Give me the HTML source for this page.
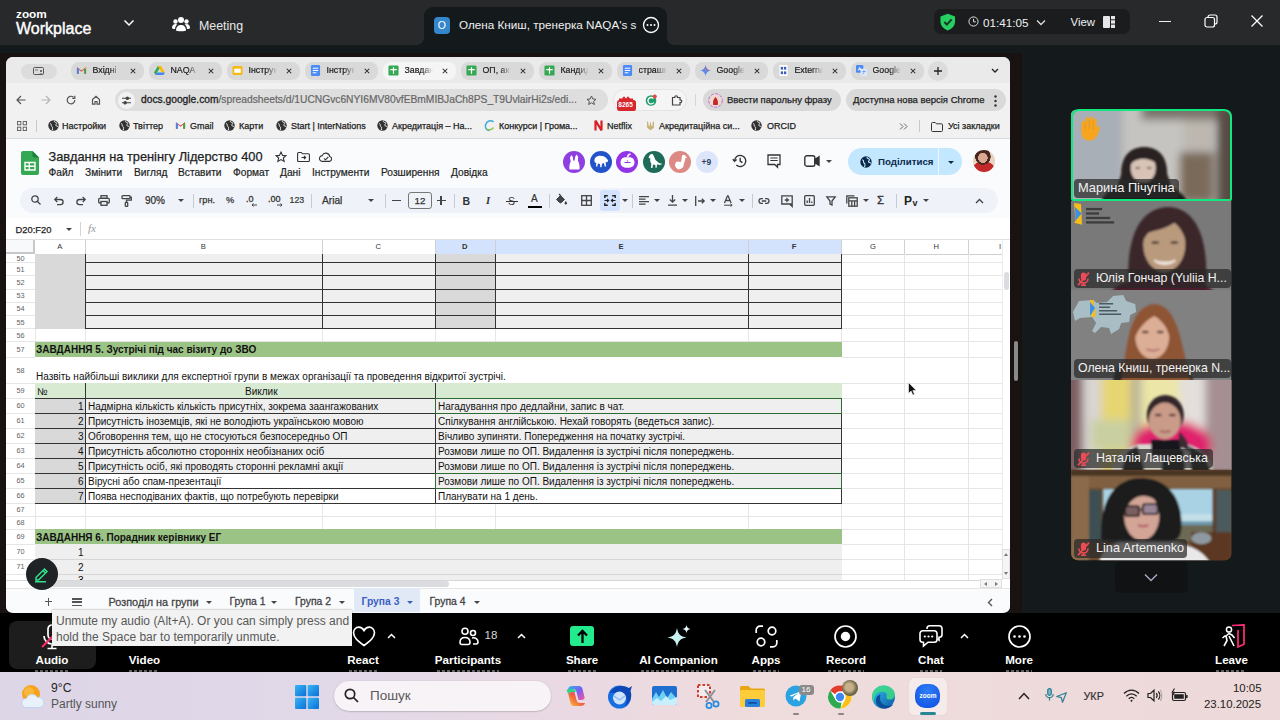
<!DOCTYPE html>
<html lang="uk">
<head>
<meta charset="utf-8">
<title>Zoom Meeting</title>
<style>
*{box-sizing:border-box;margin:0;padding:0}
html,body{width:1280px;height:720px;overflow:hidden;background:#121618;font-family:"Liberation Sans",sans-serif;}
.abs,.abs *{position:absolute}
#root{position:relative;width:1280px;height:720px;overflow:hidden;background:#13171a}
.t{white-space:nowrap;line-height:1}
svg{overflow:visible}
/* ---------- zoom title bar ---------- */
#ztitle{left:0;top:0;width:1280px;height:44.5px;background:#27292b}
#ztab{left:424px;top:7px;width:243px;height:38px;background:#14191c;border-radius:9px 9px 0 0}
#zpill{left:933.500px;top:8.500px;width:196px;height:25px;background:#1a1c1e;border-radius:7px}
/* ---------- shared screen ---------- */
#leftstrip{left:0;top:53px;width:30px;height:560px;background:#181311}
#share{left:6px;top:57px;width:1004px;height:555.500px;background:#f9fbfd;border-radius:7px;overflow:hidden}
#ctabs{left:0;top:0;width:1004px;height:28px;background:#eaeaea}
#cbar{left:0;top:26px;width:1004px;height:32px;background:#f1f1f1}
#cbm{left:0;top:58px;width:1004px;height:24px;background:#f1f1f1;border-bottom:1px solid #d9d9d9}
.ctab{top:4.5px;height:18px;width:72.5px;border-radius:8px;background:#d9d9d9}
.ctab.act{background:#f5f5f5}
.ctab .fav{left:5px;top:3.5px;width:11px;height:11px}
.ctab .lbl{left:21.5px;top:4.8px;font-size:8.8px;color:#1c1c1c;width:28px;overflow:hidden;-webkit-text-stroke:.2px #1c1c1c;-webkit-mask-image:linear-gradient(90deg,#000 60%,transparent);mask-image:linear-gradient(90deg,#000 60%,transparent)}
.ctab .x{left:59px;top:6px;width:6px;height:6px}
.bm{top:64.5px;font-size:9px;color:#1c1c1c;-webkit-text-stroke:.25px #1c1c1c}
.gl{top:63px;width:11px;height:11px}
.pill{top:32px;height:22px;border-radius:11px;background:#dadada}
.sep{width:1px;background:#c9c9c9}
/* ---------- sheets ---------- */
.menu{top:110px;font-size:10.4px;color:#1f1f1f;-webkit-text-stroke:.2px #1f1f1f}
.tbi{top:137px}
.car{top:142px;width:0;height:0;border-left:3px solid transparent;border-right:3px solid transparent;border-top:3.500px solid #444}
.tsep{top:135px;width:1px;height:14px;background:#c7cad0}
.rh{left:0;width:29px;font-size:7.300px;color:#5f6368;text-align:center;line-height:1}
.cell{font-size:9.600px;color:#000;line-height:1;white-space:nowrap}
.hl{height:1px;background:#e2e2e2;left:29px}
.vl{width:1px;background:#e2e2e2}
.bl{background:#222}
.stab{top:539px;font-size:10.400px;color:#444;-webkit-text-stroke:.25px #444;white-space:nowrap;line-height:1}
/* zoom bar */
.zl{top:41px;font-size:11.600px;color:#fff;font-weight:bold;white-space:nowrap;line-height:1;transform:translateX(-50%)}
.nm{font-size:12.500px;color:#f2f2f2;white-space:nowrap;line-height:1}
.nmb{height:19px;background:rgba(40,40,40,.72);border-radius:4px}
</style>
</head>
<body>
<div id="root" class="abs">
<!-- ================= ZOOM TITLE BAR ================= -->
<div id="ztitle">
  <div class="t" style="left:16px;top:8.500px;font-size:11.800px;color:#fff;font-weight:bold">zoom</div>
  <div class="t" style="left:16px;top:20.500px;font-size:16px;color:#fff;-webkit-text-stroke:.4px #fff">Workplace</div>
  <svg style="left:123px;top:18px" width="12" height="10" viewBox="0 0 12 10"><path d="M1.500 2.500 6 7l4.500-4.500" fill="none" stroke="#fff" stroke-width="1.500"/></svg>
  <svg style="left:172px;top:15px" width="18" height="18" viewBox="0 0 18 18" fill="#fff"><circle cx="9" cy="5" r="3"/><circle cx="3.500" cy="6.500" r="2.200"/><circle cx="14.500" cy="6.500" r="2.200"/><path d="M4 15.500c0-3.500 2-5.500 5-5.500s5 2 5 5.500c0 1-10 1-10 0z"/><path d="M0 13c0-2.500 1.500-4 3.500-4 .8 0 1.400.2 1.900.6C4 10.600 3.200 12 3 14c-1.500 0-3-.3-3-1zM18 13c0-2.500-1.500-4-3.500-4-.8 0-1.400.2-1.900.6 1.400 1 2.200 2.400 2.400 4.400 1.500 0 3-.3 3-1z"/></svg>
  <div class="t" style="left:199px;top:19.500px;font-size:12.400px;color:#e8e8e8">Meeting</div>
  <div id="ztab">
    <div style="left:-7px;bottom:.500px;width:7px;height:7px;background:radial-gradient(circle at 0 0,transparent 6.500px,#14191c 7px)"></div>
    <div style="right:-7px;bottom:.500px;width:7px;height:7px;background:radial-gradient(circle at 100% 0,transparent 6.500px,#14191c 7px)"></div>
    <div style="left:9.500px;top:10px;width:16.500px;height:16.500px;border-radius:4px;background:#3587cc"></div>
    <div class="t" style="left:13.700px;top:13px;font-size:10.500px;color:#fff">O</div>
    <div class="t" style="left:35px;top:12px;font-size:11.700px;color:#f0f0f0">Олена Книш, тренерка NAQA's s</div>
    <svg style="left:218px;top:9px" width="18" height="18" viewBox="0 0 18 18"><circle cx="9" cy="9" r="7.500" fill="none" stroke="#fff" stroke-width="1.300"/><circle cx="5.500" cy="9" r="1" fill="#fff"/><circle cx="9" cy="9" r="1" fill="#fff"/><circle cx="12.500" cy="9" r="1" fill="#fff"/></svg>
  </div>
  <div id="zpill">
    <svg style="left:5px;top:4px" width="17.500" height="18" viewBox="0 0 20 21"><path d="M10 1 18.500 4v6c0 5-3.500 8.500-8.500 10.500C5 18.500 1.500 15 1.500 10V4z" fill="#25cf62"/><path d="M6 10.500l3 3 5.500-6" fill="none" stroke="#173a26" stroke-width="2.300"/></svg>
    <svg style="left:34.500px;top:7.500px" width="11" height="11" viewBox="0 0 11 11"><circle cx="5.500" cy="5.500" r="4.600" fill="none" stroke="#ddd" stroke-width="1"/><path d="M5.500 2.800v3h2.300" fill="none" stroke="#ddd" stroke-width="1"/></svg>
    <div class="t" style="left:49.500px;top:8px;font-size:11.700px;color:#f0f0f0">01:41:05</div>
    <svg style="left:102px;top:10px" width="10" height="8" viewBox="0 0 10 8"><path d="M1 1.500 5 5.500l4-4" fill="none" stroke="#ddd" stroke-width="1.300"/></svg>
    <div class="t" style="left:137px;top:8px;font-size:11.400px;color:#f0f0f0">View</div>
    <svg style="left:169px;top:7px" width="12" height="12" viewBox="0 0 12 12" fill="#e6e6e6"><rect x="0" y="0" width="7" height="12" rx="1"/><rect x="8" y="0" width="4" height="3.300"/><rect x="8" y="4.300" width="4" height="3.300"/><rect x="8" y="8.600" width="4" height="3.400"/></svg>
  </div>
  <div style="left:1159px;top:20.500px;width:11.500px;height:1.200px;background:#f0f0f0"></div>
  <svg style="left:1204px;top:14px" width="14" height="14" viewBox="0 0 14 14" fill="none" stroke="#fff" stroke-width="1.200"><rect x="1" y="3.500" width="9.500" height="9.500" rx="2"/><path d="M4 3.500V3a2 2 0 0 1 2-2h5a2 2 0 0 1 2 2v5a2 2 0 0 1-2 2h-.5"/></svg>
  <svg style="left:1251px;top:15px" width="12" height="12" viewBox="0 0 12 12"><path d="M.5.500l11 11M11.500.500l-11 11" stroke="#fff" stroke-width="1.300"/></svg>
</div>
<div id="leftstrip"></div>
<!-- ================= SHARED SCREEN (CHROME + SHEETS) ================= -->
<div id="share">
<div id="ctabs"></div><div id="cbar"></div><div id="cbm"></div>
<div style="left:14.5px;top:6.5px;width:36.500px;height:15px;border-radius:7.500px;background:#dcdcdc"></div>
<svg style="left:27px;top:9.5px" width="11" height="9" viewBox="0 0 11 9"><rect x=".5" y=".5" width="10" height="7" rx="1" fill="none" stroke="#555" stroke-width="1"/><circle cx="8" cy="4" r="1.100" fill="#555"/><path d="M6 7.500c0-1.500 4-1.500 4 0z" fill="#555"/><path d="M2 3h3" stroke="#555" stroke-width=".8"/></svg>
<div class="ctab" style="left:65px"><svg class="fav" viewBox="0 0 12 12"><path d="M1 2.500v7h2V5l3 2.300L9 5v4.500h2v-7L6 6z" fill="#ea4335"/><path d="M1 2.500v7h2V4z" fill="#4285f4"/><path d="M11 2.500v7H9V4z" fill="#34a853"/><path d="M9 4l2-1.500V4z" fill="#fbbc04"/></svg><div class="t lbl">Вхідні</div><svg class="x" viewBox="0 0 8 8"><path d="M1 1l6 6M7 1 1 7" stroke="#222" stroke-width="1.400"/></svg></div>
<div class="ctab" style="left:143px"><svg class="fav" viewBox="0 0 12 12"><path d="M4.200 1h3.600L12 8.200H8.400z" fill="#fbbc04"/><path d="M4.200 1 0 8.200 1.800 11 6 3.900z" fill="#34a853"/><path d="M1.800 11h8.400L12 8.200H3.500z" fill="#4285f4"/><path d="M8.400 8.200 6 3.900 7.800 1 12 8.200z" fill="#ea4335" opacity=".0"/></svg><div class="t lbl">NAQA -</div><svg class="x" viewBox="0 0 8 8"><path d="M1 1l6 6M7 1 1 7" stroke="#222" stroke-width="1.400"/></svg></div>
<div class="ctab" style="left:221px"><svg class="fav" viewBox="0 0 12 12"><rect x=".5" y="1" width="11" height="10" rx="1.500" fill="#f5ba15"/><rect x="2.500" y="4" width="7" height="4.500" fill="#fff"/></svg><div class="t lbl">Інструк</div><svg class="x" viewBox="0 0 8 8"><path d="M1 1l6 6M7 1 1 7" stroke="#222" stroke-width="1.400"/></svg></div>
<div class="ctab" style="left:299px"><svg class="fav" viewBox="0 0 12 12"><rect x="1" y="0" width="10" height="12" rx="1.500" fill="#4b8bf5"/><path d="M3 3.500h6M3 6h6M3 8.500h4" stroke="#fff" stroke-width="1.100"/></svg><div class="t lbl">Інструк</div><svg class="x" viewBox="0 0 8 8"><path d="M1 1l6 6M7 1 1 7" stroke="#222" stroke-width="1.400"/></svg></div>
<div class="ctab act" style="left:377px"><svg class="fav" viewBox="0 0 12 12"><rect x=".5" y=".5" width="11" height="11" rx="1.500" fill="#34a853"/><path d="M6 2.500v7M2.500 5h7" stroke="#fff" stroke-width="1.300"/></svg><div class="t lbl">Завдан</div><svg class="x" viewBox="0 0 8 8"><path d="M1 1l6 6M7 1 1 7" stroke="#222" stroke-width="1.400"/></svg></div>
<div class="ctab" style="left:455px"><svg class="fav" viewBox="0 0 12 12"><rect x=".5" y=".5" width="11" height="11" rx="1.500" fill="#34a853"/><path d="M6 2.500v7M2.500 5h7" stroke="#fff" stroke-width="1.300"/></svg><div class="t lbl">ОП, акт</div><svg class="x" viewBox="0 0 8 8"><path d="M1 1l6 6M7 1 1 7" stroke="#222" stroke-width="1.400"/></svg></div>
<div class="ctab" style="left:533px"><svg class="fav" viewBox="0 0 12 12"><rect x=".5" y=".5" width="11" height="11" rx="1.500" fill="#34a853"/><path d="M6 2.500v7M2.500 5h7" stroke="#fff" stroke-width="1.300"/></svg><div class="t lbl">Кандид</div><svg class="x" viewBox="0 0 8 8"><path d="M1 1l6 6M7 1 1 7" stroke="#222" stroke-width="1.400"/></svg></div>
<div class="ctab" style="left:611px"><svg class="fav" viewBox="0 0 12 12"><rect x="1" y="0" width="10" height="12" rx="1.500" fill="#4b8bf5"/><path d="M3 3.500h6M3 6h6M3 8.500h4" stroke="#fff" stroke-width="1.100"/></svg><div class="t lbl">страшн</div><svg class="x" viewBox="0 0 8 8"><path d="M1 1l6 6M7 1 1 7" stroke="#222" stroke-width="1.400"/></svg></div>
<div class="ctab" style="left:689px"><svg class="fav" viewBox="0 0 12 12"><path d="M6 0c.4 3.300 2.700 5.600 6 6-3.300.4-5.600 2.700-6 6-.4-3.300-2.700-5.600-6-6 3.300-.4 5.600-2.700 6-6z" fill="#5b8def"/><path d="M6 0c.4 3.300 2.700 5.600 6 6H6z" fill="#d96570" opacity=".7"/></svg><div class="t lbl">Google</div><svg class="x" viewBox="0 0 8 8"><path d="M1 1l6 6M7 1 1 7" stroke="#222" stroke-width="1.400"/></svg></div>
<div class="ctab" style="left:767px"><svg class="fav" viewBox="0 0 12 12"><rect x="1.500" y="0" width="9" height="12" rx="1" fill="#fff"/><rect x="3" y="2" width="2.500" height="3" fill="#3b5fc0"/><rect x="6.500" y="2" width="2.500" height="3" fill="#3b5fc0"/><rect x="3" y="7" width="2.500" height="3" fill="#3b5fc0"/><rect x="6.500" y="7" width="2.500" height="3" fill="#3b5fc0"/></svg><div class="t lbl">Externa</div><svg class="x" viewBox="0 0 8 8"><path d="M1 1l6 6M7 1 1 7" stroke="#222" stroke-width="1.400"/></svg></div>
<div class="ctab" style="left:845px"><svg class="fav" viewBox="0 0 12 12"><rect x="0" y="0" width="8" height="8.500" rx="1.200" fill="#4b8bf5"/><rect x="5" y="4" width="7" height="8" rx="1.200" fill="#dfe8fb"/><path d="M2.500 6 4 2.500 5.500 6M3 5h2" stroke="#fff" stroke-width=".9" fill="none"/><path d="M7 7h3.500M8.700 6v1c0 1.500-.8 2.700-1.700 3.200" stroke="#4b8bf5" stroke-width=".8" fill="none"/></svg><div class="t lbl">Google</div><svg class="x" viewBox="0 0 8 8"><path d="M1 1l6 6M7 1 1 7" stroke="#222" stroke-width="1.400"/></svg></div>
<div style="left:922px;top:4px;width:20px;height:20px;border-radius:10px;background:#dcdcdc"></div>
<svg style="left:928px;top:10px" width="8" height="8" viewBox="0 0 8 8"><path d="M4 0v8M0 4h8" stroke="#222" stroke-width="1.300"/></svg>
<svg style="left:985px;top:11px" width="8" height="6" viewBox="0 0 8 6"><path d="M1 1l3 3 3-3" fill="none" stroke="#222" stroke-width="1.300"/></svg>
<svg style="left:10px;top:38px" width="10" height="10" viewBox="0 0 10 10" fill="none" stroke="#555" stroke-width="1.200"><path d="M9.500 5H1M5 1 1 5l4 4"/></svg>
<svg style="left:35px;top:38px" width="10" height="10" viewBox="0 0 10 10" fill="none" stroke="#b5b5b5" stroke-width="1.200"><path d="M.5 5H9M5 1l4 4-4 4"/></svg>
<svg style="left:60px;top:38px" width="10" height="10" viewBox="0 0 10 10" fill="none" stroke="#555" stroke-width="1.200"><path d="M8.800 5A3.800 3.800 0 1 1 7.500 2.200"/><path d="M8.800.8v2.500H6.300" /></svg>
<svg style="left:85px;top:38px" width="10" height="10" viewBox="0 0 10 10" fill="none" stroke="#555" stroke-width="1.200"><path d="M1.500 4.500 5 1.200l3.500 3.300V9.200H6V6.500H4v2.700H1.500z"/></svg>
<div class="pill" style="left:109px;width:493px;background:#dedede"></div>
<div style="left:112px;top:35px;width:17px;height:17px;border-radius:9px;background:#f2f2f2"></div>
<svg style="left:116px;top:39px" width="9" height="9" viewBox="0 0 9 9" fill="none" stroke="#444" stroke-width="1.100"><path d="M0 2.200h4M6.500 2.200H9M0 6.800h2M4.500 6.800H9"/><circle cx="5.300" cy="2.200" r="1.200" fill="#444"/><circle cx="3.200" cy="6.800" r="1.200" fill="#444"/></svg>
<div class="t" style="left:135px;top:38px;font-size:10.250px;color:#666;-webkit-text-stroke:.2px #666"><span style="position:static;color:#1c1c1c;-webkit-text-stroke:.3px #1c1c1c">docs.google.com</span>/spreadsheets/d/1UCNGvc6NYI6MV80vfEBmMIBJaCh8PS_T9UvlairHi2s/edi...</div>
<svg style="left:579.5px;top:37.5px" width="11" height="11" viewBox="0 0 11 11"><path d="M5.500 1l1.400 3 3.100.3-2.400 2.100.8 3.100-2.900-1.700L2.600 9.500l.8-3.100L1 4.300 4.100 4z" fill="none" stroke="#555" stroke-width="1"/></svg>
<div class="pill" style="left:607px;width:74px;background:#f5f5f5;border:1px solid #e4e4e4"></div>
<div style="left:610.5px;top:43px;width:19px;height:10.500px;border-radius:2.500px;background:#d7262c"></div>
<div class="t" style="left:612.3px;top:45.3px;font-size:6.500px;font-weight:bold;color:#fff">8265</div>
<svg style="left:613px;top:38.5px" width="14" height="5" viewBox="0 0 14 5"><path d="M0 5V2.500h14V5zM3 2.500 5 .3l2 2.200 2-2.200 2 2.200z" fill="#d7262c"/></svg>
<svg style="left:639px;top:37px" width="12" height="12" viewBox="0 0 12 12"><circle cx="6" cy="6.500" r="5.300" fill="#1e9e6a"/><path d="M8.500 4.500A3.200 3.200 0 1 0 8.800 8.500" fill="none" stroke="#fff" stroke-width="1.300"/><circle cx="9.800" cy="2.500" r="2" fill="#e5483c"/></svg>
<svg style="left:665px;top:37px" width="12" height="12" viewBox="0 0 12 12" fill="none" stroke="#444" stroke-width="1.200"><path d="M1.500 3.500h2.300c-.3-2.300 3-2.300 2.700 0H9v2.400c2.300-.3 2.300 3 0 2.700V11H1.500z"/></svg>
<div class="sep" style="left:688.5px;top:37px;height:12px;background:#d6d6d6"></div>
<div class="pill" style="left:697px;width:138px;background:#d9d9d9"></div>
<svg style="left:702px;top:35.5px" width="15" height="15" viewBox="0 0 15 15"><circle cx="7.500" cy="7.500" r="6.800" fill="#f1d9d3" stroke="#b06bd8" stroke-width="1" stroke-dasharray="3 1.500"/><path d="M5.300 12c-.8-2.500 0-6 2.200-8 2.200 2 3 5.500 2.200 8z" fill="#c22a25"/></svg>
<div class="t" style="left:721px;top:38px;font-size:9.500px;color:#222;-webkit-text-stroke:.25px #222">Ввести парольну фразу</div>
<div class="pill" style="left:840px;width:160px;background:#d9d9d9"></div>
<div class="t" style="left:847px;top:38px;font-size:9.500px;color:#222;-webkit-text-stroke:.25px #222">Доступна нова версія Chrome</div>
<svg style="left:987.5px;top:37.5px" width="3" height="12" viewBox="0 0 3 12" fill="#333"><circle cx="1.500" cy="1.500" r="1.200"/><circle cx="1.500" cy="6" r="1.200"/><circle cx="1.500" cy="10.500" r="1.200"/></svg>
<svg style="left:11px;top:64px" width="10" height="10" viewBox="0 0 10 10" fill="none" stroke="#666" stroke-width="1"><rect x=".5" y=".5" width="3.300" height="3.300"/><rect x="6.200" y=".5" width="3.300" height="3.300"/><rect x=".5" y="6.200" width="3.300" height="3.300"/><rect x="6.200" y="6.200" width="3.300" height="3.300"/></svg>
<div class="sep" style="left:30px;top:63px;height:12px"></div>
<svg class="gl" style="left:42px" viewBox="0 0 11 11"><circle cx="5.500" cy="5.500" r="5.200" fill="#333"/><path d="M2 3.500c1 .3 1.500 1 1.300 2-.2 1 .8 1 1.200 1.800.3.700-.2 1.700-.2 2.700M6.500.8c-.4 1 .5 1.500 1.500 1.700 1 .2.800 1.300.2 1.800-.7.500-.5 1.500.5 1.700.8.200 1.300.5 1.600.9" fill="none" stroke="#f3f3f3" stroke-width="1"/></svg>
<div class="t bm" style="left:56px">Настройки</div>
<svg class="gl" style="left:113px" viewBox="0 0 11 11"><circle cx="5.500" cy="5.500" r="5.200" fill="#333"/><path d="M2 3.500c1 .3 1.500 1 1.300 2-.2 1 .8 1 1.200 1.800.3.700-.2 1.700-.2 2.700M6.500.8c-.4 1 .5 1.500 1.500 1.700 1 .2.800 1.300.2 1.800-.7.500-.5 1.500.5 1.700.8.200 1.300.5 1.600.9" fill="none" stroke="#f3f3f3" stroke-width="1"/></svg>
<div class="t bm" style="left:127px">Твіттер</div>
<svg class="gl" style="left:169px" viewBox="0 0 12 12"><path d="M1 2.500v7h2V5l3 2.300L9 5v4.500h2v-7L6 6z" fill="#ea4335"/><path d="M1 2.500v7h2V4z" fill="#4285f4"/><path d="M11 2.500v7H9V4z" fill="#34a853"/></svg>
<div class="t bm" style="left:184px">Gmail</div>
<svg class="gl" style="left:218px" viewBox="0 0 11 11"><circle cx="5.500" cy="5.500" r="5.200" fill="#333"/><path d="M2 3.500c1 .3 1.500 1 1.300 2-.2 1 .8 1 1.200 1.800.3.700-.2 1.700-.2 2.700M6.500.8c-.4 1 .5 1.500 1.500 1.700 1 .2.800 1.300.2 1.800-.7.500-.5 1.500.5 1.700.8.200 1.300.5 1.600.9" fill="none" stroke="#f3f3f3" stroke-width="1"/></svg>
<div class="t bm" style="left:233px">Карти</div>
<svg class="gl" style="left:270px" viewBox="0 0 11 11"><circle cx="5.500" cy="5.500" r="5.200" fill="#333"/><path d="M2 3.500c1 .3 1.500 1 1.300 2-.2 1 .8 1 1.200 1.800.3.700-.2 1.700-.2 2.700M6.500.8c-.4 1 .5 1.500 1.500 1.700 1 .2.800 1.300.2 1.800-.7.500-.5 1.500.5 1.700.8.200 1.300.5 1.600.9" fill="none" stroke="#f3f3f3" stroke-width="1"/></svg>
<div class="t bm" style="left:285px">Start | InterNations</div>
<svg class="gl" style="left:371px" viewBox="0 0 11 11"><circle cx="5.500" cy="5.500" r="5.200" fill="#333"/><path d="M2 3.500c1 .3 1.500 1 1.300 2-.2 1 .8 1 1.200 1.800.3.700-.2 1.700-.2 2.700M6.500.8c-.4 1 .5 1.500 1.500 1.700 1 .2.800 1.300.2 1.800-.7.500-.5 1.500.5 1.700.8.200 1.300.5 1.600.9" fill="none" stroke="#f3f3f3" stroke-width="1"/></svg>
<div class="t bm" style="left:386px">Акредитація – На...</div>
<svg class="gl" style="left:478px" viewBox="0 0 11 11"><path d="M9.500 2C7 -.5 2.500 1 1.500 5c-.7 3 1 5.500 4 5.500" fill="none" stroke="#3fa9d8" stroke-width="1.500"/><path d="M3 9c2 1.500 5 .5 6.500-1.500" fill="none" stroke="#8cc63f" stroke-width="1.300"/></svg>
<div class="t bm" style="left:493px">Конкурси | Грома...</div>
<svg class="gl" style="left:587px" viewBox="0 0 11 11"><path d="M2.500.5v10M8.500.5v10M2.500.5l6 10" stroke="#d81f26" stroke-width="2.200" fill="none"/></svg>
<div class="t bm" style="left:601px">Netflix</div>
<svg class="gl" style="left:639px" viewBox="0 0 11 11"><path d="M2 1v6c0 1 1.500 1.500 3.500 3.500C7.500 8.500 9 8 9 7V1L7.500 3v3h-1L5.500 1l-1 5h-1V3z" fill="#c9b27a"/></svg>
<div class="t bm" style="left:653px">Акредитаційна си...</div>
<svg class="gl" style="left:745px" viewBox="0 0 11 11"><circle cx="5.500" cy="5.500" r="5.200" fill="#333"/><path d="M2 3.500c1 .3 1.500 1 1.300 2-.2 1 .8 1 1.200 1.800.3.700-.2 1.700-.2 2.700M6.500.8c-.4 1 .5 1.500 1.500 1.700 1 .2.800 1.300.2 1.800-.7.500-.5 1.500.5 1.700.8.200 1.300.5 1.600.9" fill="none" stroke="#f3f3f3" stroke-width="1"/></svg>
<div class="t bm" style="left:761px">ORCID</div>
<svg style="left:893px;top:66px" width="9" height="7" viewBox="0 0 9 7" fill="none" stroke="#666" stroke-width="1"><path d="M1 .5l3 3-3 3M5 .5l3 3-3 3"/></svg>
<div class="sep" style="left:913px;top:63px;height:12px"></div>
<svg style="left:925px;top:64.5px" width="12" height="10" viewBox="0 0 12 10" fill="none" stroke="#333" stroke-width="1"><path d="M.5 1.500c0-.6.4-1 1-1h2.700l1.200 1.300h5.100c.6 0 1 .4 1 1v5.700c0 .6-.4 1-1 1h-9c-.6 0-1-.4-1-1z"/></svg>
<div class="t bm" style="left:942px">Усі закладки</div>
<!--SHEETS-->
<svg style="left:15px;top:94px" width="18" height="24" viewBox="0 0 18 24"><path d="M2 0h9.500L18 6.500V22a2 2 0 0 1-2 2H2a2 2 0 0 1-2-2V2a2 2 0 0 1 2-2z" fill="#34a853"/><path d="M11.500 0 18 6.500h-4.500a2 2 0 0 1-2-2z" fill="#188038"/><path d="M4 11.500h10v7.500H4zM4 15.200h10M8.300 11.500v7.500" fill="none" stroke="#fff" stroke-width="1.400"/></svg>
<div class="t" style="left:42.5px;top:94px;font-size:12.8px;color:#1f1f1f;-webkit-text-stroke:.25px #1f1f1f">Завдання на тренінгу Лідерство 400</div>
<svg style="left:269px;top:94px" width="12" height="12" viewBox="0 0 11 11"><path d="M5.500 1l1.400 3 3.100.3-2.400 2.100.8 3.100-2.900-1.700L2.600 9.500l.8-3.100L1 4.300 4.100 4z" fill="none" stroke="#333" stroke-width="1"/></svg>
<svg style="left:291px;top:95px" width="13" height="10" viewBox="0 0 13 10" fill="none" stroke="#333" stroke-width="1.100"><path d="M.6 1.500c0-.6.4-1 1-1h2.700l1.200 1.300h5.900c.6 0 1 .4 1 1v5.700c0 .6-.4 1-1 1H1.600c-.6 0-1-.4-1-1z"/><path d="M4.500 5.500h4M7 3.800l1.700 1.700L7 7.200"/></svg>
<svg style="left:313px;top:95px" width="14" height="10" viewBox="0 0 14 10" fill="none" stroke="#333" stroke-width="1.100"><path d="M3.500 9.400a2.900 2.900 0 0 1-.3-5.800 3.900 3.900 0 0 1 7.500.9 2.500 2.500 0 0 1-.2 4.900z"/><path d="M5 6.300l1.500 1.500L9.300 5"/></svg>
<div class="t" style="left:42.5px;top:110.5px;font-size:10.2px;color:#1f1f1f;-webkit-text-stroke:.2px #1f1f1f">Файл</div>
<div class="t" style="left:79px;top:110.5px;font-size:10.2px;color:#1f1f1f;-webkit-text-stroke:.2px #1f1f1f">Змінити</div>
<div class="t" style="left:128px;top:110.5px;font-size:10.2px;color:#1f1f1f;-webkit-text-stroke:.2px #1f1f1f">Вигляд</div>
<div class="t" style="left:172px;top:110.5px;font-size:10.2px;color:#1f1f1f;-webkit-text-stroke:.2px #1f1f1f">Вставити</div>
<div class="t" style="left:227px;top:110.5px;font-size:10.2px;color:#1f1f1f;-webkit-text-stroke:.2px #1f1f1f">Формат</div>
<div class="t" style="left:274px;top:110.5px;font-size:10.2px;color:#1f1f1f;-webkit-text-stroke:.2px #1f1f1f">Дані</div>
<div class="t" style="left:306px;top:110.5px;font-size:10.2px;color:#1f1f1f;-webkit-text-stroke:.2px #1f1f1f">Інструменти</div>
<div class="t" style="left:375px;top:110.5px;font-size:10.2px;color:#1f1f1f;-webkit-text-stroke:.2px #1f1f1f">Розширення</div>
<div class="t" style="left:445px;top:110.5px;font-size:10.2px;color:#1f1f1f;-webkit-text-stroke:.2px #1f1f1f">Довідка</div>
<div style="left:557px;top:93.5px;width:22px;height:22px;border-radius:11px;background:#8e3fe0"></div>
<div style="left:584px;top:93.5px;width:22px;height:22px;border-radius:11px;background:#2353c9"></div>
<div style="left:610px;top:93.5px;width:22px;height:22px;border-radius:11px;background:#9334e6"></div>
<div style="left:637px;top:93.5px;width:22px;height:22px;border-radius:11px;background:#1e6b57"></div>
<div style="left:663px;top:93.5px;width:22px;height:22px;border-radius:11px;background:#dd8a84"></div>
<svg style="left:560.5px;top:96.5px" width="15" height="16" viewBox="0 0 15 16" fill="#fff"><path d="M2.500 15.500c-.5-3 0-6 1.200-8L3 3.500 4.500 1l1.300 2 .4 3.500 1.300.2.700-4L9.500.5l1.700 2.200-.3 4c1.300 2 2 5.500 1.600 8.800z"/></svg>
<svg style="left:587px;top:98px" width="16" height="13" viewBox="0 0 16 13" fill="#fff"><path d="M1.500 6.500C1 3 3.500.8 7 .8c3 0 5 .8 6.500 2.500l1.700 2.200-1 1.800-1.500-.3.300 4.500h-1.300L11 8l-2 .8-.5 3.500H7.300L7 9 5 8.500l-.8 3H3L3.300 8C2.300 7.800 1.700 7.300 1.500 6.500z"/></svg>
<svg style="left:613.5px;top:96px" width="15" height="16" viewBox="0 0 15 16"><path d="M7.500 4.500C12 3.500 14.500 6 14.500 9.500S12 14.800 7.500 14.800.5 13 .5 9.500 3 3.500 7.500 4.500z" fill="#fff"/><path d="M7.500 4.500C7.500 3 8.500 1.500 10.500 1" stroke="#fff" stroke-width="1.500" fill="none"/><path d="M4.500 9.500h6M7.500 7.500v1" stroke="#9334e6" stroke-width="1.200"/></svg>
<svg style="left:639.5px;top:96px" width="17" height="16" viewBox="0 0 17 16" fill="#fff"><path d="M3 3.500C3.500 1.500 5.500.5 7 1.500l1 2 1.500 3.500 3.500 3 3.500 1-3 1-2.500-.8-.3 3.500H9.500L9.300 12 7 11.500l-.5 3.500H5l.3-4.500C4 9 3.800 7 4.500 5.500L2.500 5z"/></svg>
<svg style="left:666.5px;top:96.5px" width="15" height="16" viewBox="0 0 15 16" fill="#fff"><path d="M10.500.8c1.200 0 2 .7 2.200 1.700l1.800.8-2 .7-.8 3.500-1 2.500c.3 2.500-1 4.500-3.500 5L5 15.500 2.500 13C1.500 11 2 8.500 4 7.500l4 .5.800-4.500C8.800 1.800 9.500.8 10.500.8z"/></svg>
<div style="left:690px;top:93.5px;width:22px;height:22px;border-radius:11px;background:#dde5fb"></div>
<div class="t" style="left:695.5px;top:100.5px;font-size:8.5px;color:#33425e;font-weight:bold">+9</div>
<svg style="left:726px;top:97px" width="15" height="14" viewBox="0 0 15 14" fill="none" stroke="#333" stroke-width="1.400"><path d="M2.600 7A5.600 5.600 0 1 1 4.300 11"/><path d="M.8 5.200 2.600 7.200l2-1.800"/><path d="M8.200 3.800v3.400l2.300 1.400"/></svg>
<svg style="left:761px;top:97px" width="14" height="14" viewBox="0 0 14 14" fill="none" stroke="#333" stroke-width="1.300"><path d="M1 1h12v9.500h-2.500V13.300L7.700 10.500H1z"/><path d="M3.300 4h7.400M3.300 6.500h7.400" stroke-width="1"/></svg>
<svg style="left:798px;top:98px" width="16" height="12" viewBox="0 0 16 12" fill="none" stroke="#333" stroke-width="1.400"><rect x=".8" y=".8" width="10" height="10.400" rx="2"/><path d="M10.800 4.500 15 1.800v8.400L10.800 7.500z" fill="#333"/></svg>
<div class="car" style="left:820px;top:103px"></div>
<div style="left:842px;top:90.8px;width:114px;height:27.7px;background:#c2e7ff;border-radius:14px"></div>
<div style="left:931.5px;top:90.8px;width:1.0px;height:27.7px;background:#eef6ff;"></div>
<svg style="left:854px;top:98.8px" width="12" height="12" viewBox="0 0 11 11"><circle cx="5.500" cy="5.500" r="5.200" fill="#0b2a4a"/><path d="M2 3.500c1 .3 1.500 1 1.300 2-.2 1 .8 1 1.200 1.800.3.700-.2 1.700-.2 2.700M6.500.8c-.4 1 .5 1.500 1.500 1.700 1 .2.800 1.300.2 1.800-.7.500-.5 1.500.5 1.700.8.200 1.300.5 1.600.9" fill="none" stroke="#c2e7ff" stroke-width="1"/></svg>
<div class="t" style="left:872px;top:100px;font-size:9.7px;color:#0b2a4a;font-weight:bold">Поділитися</div>
<div class="car" style="left:941.5px;top:103.5px;border-top-color:#0b2a4a"></div>
<div style="left:967px;top:93px;width:22px;height:22px;border-radius:11px;background:radial-gradient(ellipse 22% 24% at 45% 36%,#d9a890 0 95%,transparent 100%),radial-gradient(ellipse 36% 38% at 45% 30%,#4a2620 0 95%,transparent 100%),radial-gradient(ellipse 55% 45% at 48% 95%,#c3282a 0 95%,transparent 100%),#e8d2c2"></div>
<div style="left:14px;top:130.5px;width:978px;height:25.5px;background:#eff3f9;border-radius:13px"></div>
<svg style="left:25.0px;top:138.0px" width="10" height="10" viewBox="0 0 10 10"><circle cx="4" cy="4" r="3.200" stroke="#444" fill="none" stroke-width="1.300"/><path d="M6.500 6.500 9.500 9.500" stroke="#444" fill="none" stroke-width="1.300"/></svg>
<svg style="left:48.0px;top:139.0px" width="10" height="9" viewBox="0 0 10 9"><path d="M1 3.500h5.500a2.600 2.600 0 0 1 0 5.200H3" stroke="#444" fill="none" stroke-width="1.300"/><path d="M3.300 1 .8 3.500l2.500 2.500" stroke="#444" fill="none" stroke-width="1.300"/></svg>
<svg style="left:70.0px;top:139.0px" width="10" height="9" viewBox="0 0 10 9"><path d="M9 3.500H3.500a2.600 2.600 0 0 0 0 5.200H7" stroke="#444" fill="none" stroke-width="1.300"/><path d="M6.700 1 9.200 3.500 6.700 6" stroke="#444" fill="none" stroke-width="1.300"/></svg>
<svg style="left:92.0px;top:138.0px" width="12" height="11" viewBox="0 0 12 11"><rect x="3" y=".7" width="6" height="2.600" stroke="#444" fill="none" stroke-width="1.300"/><rect x=".7" y="3.300" width="10.600" height="4.700" rx="1" stroke="#444" fill="none" stroke-width="1.300"/><rect x="3" y="6.500" width="6" height="3.800" fill="#eff3f9" stroke="#444" fill="none" stroke-width="1.300"/></svg>
<svg style="left:114.5px;top:137.5px" width="11" height="12" viewBox="0 0 11 12"><rect x="1" y=".7" width="8" height="3" rx=".8" stroke="#444" fill="none" stroke-width="1.300"/><path d="M9 2.200h1.300v3H5.500v2" stroke="#444" fill="none" stroke-width="1.300"/><rect x="4.300" y="7.300" width="2.400" height="4" rx=".6" stroke="#444" fill="none" stroke-width="1.300"/></svg>
<div class="t" style="left:139px;top:138.5px;font-size:10px;color:#333;-webkit-text-stroke:.25px #333">90%</div>
<div class="car" style="left:172px;top:142.0px"></div>
<div style="left:187px;top:136.5px;width:1px;height:14.0px;background:#c7cad1;"></div>
<div class="t" style="left:193px;top:139px;font-size:9.2px;color:#333;-webkit-text-stroke:.25px #333">грн.</div>
<div class="t" style="left:220px;top:139px;font-size:9.2px;color:#333;-webkit-text-stroke:.25px #333">%</div>
<div class="t" style="left:240px;top:138px;font-size:9px;color:#333;-webkit-text-stroke:.3px #333">.0</div>
<svg style="left:245.0px;top:145.5px" width="6" height="4" viewBox="0 0 6 4"><path d="M6 2H1M2.500 .4 1 2l1.500 1.600" stroke="#333" fill="none" stroke-width=".9"/></svg>
<div class="t" style="left:262px;top:138px;font-size:9px;color:#333;-webkit-text-stroke:.3px #333">.00</div>
<svg style="left:271.0px;top:145.5px" width="6" height="4" viewBox="0 0 6 4"><path d="M0 2h5M3.500 .4 5 2 3.500 3.600" stroke="#333" fill="none" stroke-width=".9"/></svg>
<div class="t" style="left:283.5px;top:139px;font-size:8.8px;color:#333;-webkit-text-stroke:.2px #333">123</div>
<div style="left:305px;top:136.5px;width:1px;height:14.0px;background:#c7cad1;"></div>
<div class="t" style="left:316px;top:138.5px;font-size:10.2px;color:#333;-webkit-text-stroke:.25px #333">Arial</div>
<div class="car" style="left:362px;top:142.0px"></div>
<div style="left:379px;top:136.5px;width:1px;height:14.0px;background:#c7cad1;"></div>
<div style="left:386px;top:143px;width:9px;height:1.3px;background:#444;"></div>
<div style="left:402px;top:134.5px;width:24px;height:17.5px;background:transparent;border:1px solid #747775;border-radius:3px"></div>
<div class="t" style="left:408.5px;top:139px;font-size:9.8px;color:#333;-webkit-text-stroke:.25px #333">12</div>
<div style="left:430.5px;top:143px;width:9.0px;height:1.3px;background:#444;"></div>
<div style="left:434.4px;top:139px;width:1.3px;height:9px;background:#444;"></div>
<div style="left:448px;top:136.5px;width:1px;height:14.0px;background:#c7cad1;"></div>
<div class="t" style="left:456.5px;top:138.5px;font-size:10.5px;color:#333;font-weight:bold">B</div>
<div class="t" style="left:480px;top:138.5px;font-size:10.5px;color:#333;font-style:italic;font-weight:bold;font-family:Liberation Serif,serif">I</div>
<div class="t" style="left:502px;top:138.5px;font-size:10.5px;color:#333;">S</div>
<div style="left:500px;top:143.5px;width:12px;height:1.0px;background:#333;"></div>
<div class="t" style="left:525px;top:137px;font-size:10px;color:#333;-webkit-text-stroke:.2px #333">A</div>
<div style="left:522px;top:148.5px;width:14px;height:2.3px;background:#000;"></div>
<div style="left:543px;top:136.5px;width:1px;height:14.0px;background:#c7cad1;"></div>
<svg style="left:549.0px;top:136.0px" width="12" height="12" viewBox="0 0 12 12"><path d="M1.500 6.500 5.500 2.500l4 4-3 3c-.6.6-1.400.6-2 0z" fill="#444" stroke="#444" stroke-width="1"/><path d="M4 1 6 3" stroke="#444" fill="none" stroke-width="1.300"/><path d="M10.800 8c.8 1 1.200 1.700 1.200 2.200a1.200 1.200 0 0 1-2.400 0c0-.5.400-1.200 1.200-2.200z" fill="#444"/></svg>
<svg style="left:574.5px;top:138.0px" width="11" height="11" viewBox="0 0 11 11"><rect x=".7" y=".7" width="9.600" height="9.600" stroke="#444" fill="none" stroke-width="1.300"/><path d="M5.500 .7v9.600M.7 5.500h9.600" stroke="#444" fill="none" stroke-width="1.300"/></svg>
<div style="left:593.5px;top:133px;width:20.0px;height:21px;background:#d3e3fd;border-radius:3px"></div>
<svg style="left:597.5px;top:138.0px" width="12" height="11" viewBox="0 0 12 11"><path d="M.8 3V.8h3M11.200 3V.8h-3M.8 8v2.200h3M11.200 8v2.200h-3" stroke="#222" fill="none" stroke-width="1.400"/><path d="M.5 5.500h4M3 4l1.600 1.500L3 7M11.500 5.500h-4M9 4 7.400 5.500 9 7" stroke="#222" fill="none" stroke-width="1.200"/></svg>
<div class="car" style="left:616px;top:142.0px"></div>
<div style="left:626px;top:136.5px;width:1px;height:14.0px;background:#c7cad1;"></div>
<svg style="left:633.0px;top:139.0px" width="10" height="9" viewBox="0 0 10 9"><path d="M0 .7h10M0 3.200h6.500M0 5.700h10M0 8.200h6.500" stroke="#444" fill="none" stroke-width="1.300"/></svg>
<div class="car" style="left:647.5px;top:142.0px"></div>
<svg style="left:661.5px;top:138.0px" width="9" height="11" viewBox="0 0 9 11"><path d="M4.500 0v7M1.800 4.500 4.500 7.200 7.200 4.500M0 10.200h9" stroke="#444" fill="none" stroke-width="1.300"/></svg>
<div class="car" style="left:675.5px;top:142.0px"></div>
<svg style="left:689.0px;top:138.5px" width="10" height="10" viewBox="0 0 10 10"><path d="M.7 0v10M3 5h6M6.800 2.700 9.200 5 6.800 7.300" stroke="#444" fill="none" stroke-width="1.300"/></svg>
<div class="car" style="left:703.5px;top:142.0px"></div>
<svg style="left:716.5px;top:138.0px" width="11" height="11" viewBox="0 0 11 11"><path d="M1.500 8 4.500 .8h.6l3 7.200M2.600 5.500h4.400" stroke="#444" fill="none" stroke-width="1.300"/><path d="M1 10.200h8M7.500 8.800 9.200 10.200 7.500 11.600" stroke="#444" fill="none" stroke-width="1"/></svg>
<div class="car" style="left:732.5px;top:142.0px"></div>
<div style="left:746px;top:136.5px;width:1px;height:14.0px;background:#c7cad1;"></div>
<svg style="left:752.0px;top:140.5px" width="12" height="6" viewBox="0 0 12 6"><path d="M5 .7H3.300a2.300 2.300 0 0 0 0 4.600H5M7 .7h1.700a2.300 2.300 0 0 1 0 4.600H7M3.800 3h4.400" stroke="#444" fill="none" stroke-width="1.300"/></svg>
<svg style="left:775.0px;top:137.5px" width="12" height="12" viewBox="0 0 12 12"><path d="M.8 .8h10.400v8.200H8.500L11.200 11.500V9H.8z" stroke="#444" fill="none" stroke-width="1.300"/><path d="M6 2.800v4.400M3.800 5h4.400" stroke="#444" fill="none" stroke-width="1.300"/></svg>
<svg style="left:797.5px;top:138.0px" width="11" height="11" viewBox="0 0 11 11"><rect x=".7" y=".7" width="9.600" height="9.600" rx="1" stroke="#444" fill="none" stroke-width="1.300"/><path d="M3.200 8V5.500M5.500 8V3M7.800 8V6.500" stroke="#444" fill="none" stroke-width="1.300"/></svg>
<svg style="left:820.0px;top:138.5px" width="10" height="10" viewBox="0 0 10 10"><path d="M.8 .8h8.400L6 5v4L4 8V5z" stroke="#444" fill="none" stroke-width="1.300"/></svg>
<svg style="left:840.0px;top:137.5px" width="12" height="12" viewBox="0 0 12 12"><rect x="2.800" y="2.800" width="8.400" height="8.400" stroke="#444" fill="none" stroke-width="1.300"/><path d="M2.800 5.800h8.400M5.800 5.800v5.400M8.600 5.800v5.400" stroke="#444" fill="none" stroke-width="1.300" stroke-width="1"/><path d="M.8 8.500V.8h7.700" stroke="#444" fill="none" stroke-width="1.300"/></svg>
<div class="car" style="left:856.5px;top:142.0px"></div>
<div class="t" style="left:871px;top:137.5px;font-size:11.5px;color:#333;-webkit-text-stroke:.3px #333">Σ</div>
<div style="left:890px;top:136.5px;width:1px;height:14.0px;background:#c7cad1;"></div>
<div class="t" style="left:898px;top:137.5px;font-size:12px;color:#222;font-weight:bold">P</div>
<div class="t" style="left:906.5px;top:141.5px;font-size:9px;color:#222;font-weight:bold">v</div>
<div class="car" style="left:917px;top:142.0px"></div>
<svg style="left:968.5px;top:140.5px" width="9" height="6" viewBox="0 0 9 6"><path d="M1 5 4.500 1.500 8 5" stroke="#444" fill="none" stroke-width="1.400"/></svg>
<div style="left:0px;top:160.5px;width:1004px;height:22.5px;background:#fff;"></div>
<div class="t" style="left:9.5px;top:167.5px;font-size:9.4px;color:#222;-webkit-text-stroke:.25px #222">D20:F20</div>
<div class="car" style="left:59.5px;top:171.0px"></div>
<div style="left:74px;top:165px;width:1px;height:14px;background:#d5d5d5;"></div>
<div class="t" style="left:82px;top:166px;font-size:11px;color:#999;font-style:italic;font-family:Liberation Serif,serif">fx</div>
<div style="left:0px;top:182px;width:1004px;height:1px;background:#e1e1e1;"></div>
<div style="left:0px;top:183px;width:1004px;height:348px;background:#fff;"></div>
<div style="left:0px;top:183px;width:996px;height:14px;background:#fff;"></div>
<div style="left:429px;top:183px;width:406.5px;height:14px;background:#d3e3fd;"></div>
<div style="left:0px;top:183px;width:27px;height:14px;background:#f8f9fa;border-right:2.500px solid #c8c8c8;border-bottom:2.500px solid #c8c8c8;width:29px"></div>
<div class="t" style="left:51.25px;top:185.5px;font-size:7.6px;color:#333;">A</div>
<div style="left:79.0px;top:183px;width:1.0px;height:14px;background:#d0d0d0;"></div>
<div class="t" style="left:194.75px;top:185.5px;font-size:7.6px;color:#333;">B</div>
<div style="left:315.5px;top:183px;width:1.0px;height:14px;background:#d0d0d0;"></div>
<div class="t" style="left:369.5px;top:185.5px;font-size:7.6px;color:#333;">C</div>
<div style="left:428.5px;top:183px;width:1.0px;height:14px;background:#d0d0d0;"></div>
<div class="t" style="left:456.0px;top:185.5px;font-size:7.6px;color:#333;font-weight:bold;">D</div>
<div style="left:488.5px;top:183px;width:1.0px;height:14px;background:#d0d0d0;"></div>
<div class="t" style="left:612.5px;top:185.5px;font-size:7.6px;color:#333;font-weight:bold;">E</div>
<div style="left:741.5px;top:183px;width:1.0px;height:14px;background:#d0d0d0;"></div>
<div class="t" style="left:785.75px;top:185.5px;font-size:7.6px;color:#333;font-weight:bold;">F</div>
<div style="left:835.0px;top:183px;width:1.0px;height:14px;background:#d0d0d0;"></div>
<div class="t" style="left:864.0px;top:185.5px;font-size:7.6px;color:#333;">G</div>
<div style="left:898.0px;top:183px;width:1.0px;height:14px;background:#d0d0d0;"></div>
<div class="t" style="left:927.5px;top:185.5px;font-size:7.6px;color:#333;">H</div>
<div style="left:962.0px;top:183px;width:1.0px;height:14px;background:#d0d0d0;"></div>
<div class="t" style="left:993px;top:185.5px;font-size:7.6px;color:#333;">I</div>
<div style="left:995.5px;top:183px;width:1.0px;height:14px;background:#d0d0d0;"></div>
<div style="left:0px;top:196.5px;width:996px;height:1.0px;background:#d0d0d0;"></div>
<div style="left:0px;top:197px;width:29px;height:326px;background:#fff;"></div>
<div class="rh" style="top:197.5px">50</div>
<div class="rh" style="top:208.62px">51</div>
<div class="rh" style="top:221.88px">52</div>
<div class="rh" style="top:235.12px">53</div>
<div class="rh" style="top:248.38px">54</div>
<div class="rh" style="top:261.5px">55</div>
<div class="rh" style="top:274.5px">56</div>
<div class="rh" style="top:288.75px">57</div>
<div class="rh" style="top:309.5px">58</div>
<div class="rh" style="top:330.25px">59</div>
<div class="rh" style="top:345.38px">60</div>
<div class="rh" style="top:360.25px">61</div>
<div class="rh" style="top:375.25px">62</div>
<div class="rh" style="top:390.25px">63</div>
<div class="rh" style="top:405.25px">64</div>
<div class="rh" style="top:420.25px">65</div>
<div class="rh" style="top:435.12px">66</div>
<div class="rh" style="top:449.0px">67</div>
<div class="rh" style="top:462.0px">68</div>
<div class="rh" style="top:476.12px">69</div>
<div class="rh" style="top:491.25px">70</div>
<div class="rh" style="top:506.12px">71</div>
<div style="left:0px;top:205.0px;width:996px;height:1.0px;background:#e6e6e6;"></div>
<div style="left:0px;top:218.25px;width:996px;height:1.0px;background:#e6e6e6;"></div>
<div style="left:0px;top:231.5px;width:996px;height:1.0px;background:#e6e6e6;"></div>
<div style="left:0px;top:244.75px;width:996px;height:1.0px;background:#e6e6e6;"></div>
<div style="left:0px;top:258.0px;width:996px;height:1.0px;background:#e6e6e6;"></div>
<div style="left:0px;top:271.0px;width:996px;height:1.0px;background:#e6e6e6;"></div>
<div style="left:0px;top:284.0px;width:996px;height:1.0px;background:#e6e6e6;"></div>
<div style="left:0px;top:299.5px;width:996px;height:1.0px;background:#e6e6e6;"></div>
<div style="left:0px;top:325.5px;width:996px;height:1.0px;background:#e6e6e6;"></div>
<div style="left:0px;top:341.0px;width:996px;height:1.0px;background:#e6e6e6;"></div>
<div style="left:0px;top:355.75px;width:996px;height:1.0px;background:#e6e6e6;"></div>
<div style="left:0px;top:370.75px;width:996px;height:1.0px;background:#e6e6e6;"></div>
<div style="left:0px;top:385.75px;width:996px;height:1.0px;background:#e6e6e6;"></div>
<div style="left:0px;top:400.75px;width:996px;height:1.0px;background:#e6e6e6;"></div>
<div style="left:0px;top:415.75px;width:996px;height:1.0px;background:#e6e6e6;"></div>
<div style="left:0px;top:430.75px;width:996px;height:1.0px;background:#e6e6e6;"></div>
<div style="left:0px;top:445.5px;width:996px;height:1.0px;background:#e6e6e6;"></div>
<div style="left:0px;top:458.5px;width:996px;height:1.0px;background:#e6e6e6;"></div>
<div style="left:0px;top:471.5px;width:996px;height:1.0px;background:#e6e6e6;"></div>
<div style="left:0px;top:486.75px;width:996px;height:1.0px;background:#e6e6e6;"></div>
<div style="left:0px;top:501.75px;width:996px;height:1.0px;background:#e6e6e6;"></div>
<div style="left:0px;top:516.5px;width:996px;height:1.0px;background:#e6e6e6;"></div>
<div style="left:0px;top:522.5px;width:996px;height:1.0px;background:#e6e6e6;"></div>
<div style="left:28.5px;top:197px;width:1.0px;height:326px;background:#e6e6e6;"></div>
<div style="left:79.0px;top:197px;width:1.0px;height:326px;background:#e6e6e6;"></div>
<div style="left:315.5px;top:197px;width:1.0px;height:326px;background:#e6e6e6;"></div>
<div style="left:428.5px;top:197px;width:1.0px;height:326px;background:#e6e6e6;"></div>
<div style="left:488.5px;top:197px;width:1.0px;height:326px;background:#e6e6e6;"></div>
<div style="left:741.5px;top:197px;width:1.0px;height:326px;background:#e6e6e6;"></div>
<div style="left:835.0px;top:197px;width:1.0px;height:326px;background:#e6e6e6;"></div>
<div style="left:898.0px;top:197px;width:1.0px;height:326px;background:#e6e6e6;"></div>
<div style="left:962.0px;top:197px;width:1.0px;height:326px;background:#e6e6e6;"></div>
<div style="left:995.5px;top:197px;width:1.0px;height:326px;background:#e6e6e6;"></div>
<div style="left:29px;top:197px;width:50.5px;height:74.5px;background:#d9d9d9;"></div>
<div style="left:79.5px;top:197px;width:349.5px;height:74.5px;background:#efefef;"></div>
<div style="left:429px;top:197px;width:60px;height:74.5px;background:#d9d9d9;"></div>
<div style="left:489px;top:197px;width:346.5px;height:74.5px;background:#efefef;"></div>
<div style="left:29px;top:284.5px;width:806.5px;height:15.5px;background:#9bc385;"></div>
<div style="left:29px;top:300px;width:806.5px;height:26px;background:#fff;"></div>
<div style="left:29px;top:326px;width:806.5px;height:15.5px;background:#d9ead3;"></div>
<div style="left:29px;top:341.5px;width:50.5px;height:104.5px;background:#d9d9d9;"></div>
<div style="left:79.5px;top:341.5px;width:349.5px;height:74.75px;background:#efefef;"></div>
<div style="left:79.5px;top:416.25px;width:349.5px;height:29.75px;background:#fff;"></div>
<div style="left:429px;top:341.5px;width:406.5px;height:89.75px;background:#efefef;"></div>
<div style="left:429px;top:431.25px;width:406.5px;height:14.75px;background:#fff;"></div>
<div style="left:29px;top:472px;width:806.5px;height:15.25px;background:#9bc385;"></div>
<div style="left:29px;top:487.25px;width:806.5px;height:35.75px;background:#efefef;"></div>
<div style="left:29px;top:501.75px;width:806.5px;height:1.0px;background:#d6d6d6;"></div>
<div style="left:29px;top:516.5px;width:806.5px;height:1.0px;background:#d6d6d6;"></div>
<div style="left:79.5px;top:204.95px;width:756.0px;height:1.1px;background:#333;"></div>
<div style="left:79.5px;top:217.95px;width:756.0px;height:1.1px;background:#333;"></div>
<div style="left:79.5px;top:231.95px;width:756.0px;height:1.1px;background:#333;"></div>
<div style="left:79.5px;top:244.95px;width:756.0px;height:1.1px;background:#333;"></div>
<div style="left:79.5px;top:257.95px;width:756.0px;height:1.1px;background:#333;"></div>
<div style="left:79.5px;top:270.95px;width:756.0px;height:1.1px;background:#333;"></div>
<div style="left:78.95px;top:197px;width:1.1px;height:75px;background:#333;"></div>
<div style="left:315.95px;top:197px;width:1.1px;height:75px;background:#333;"></div>
<div style="left:428.95px;top:197px;width:1.1px;height:75px;background:#333;"></div>
<div style="left:488.95px;top:197px;width:1.1px;height:75px;background:#333;"></div>
<div style="left:741.95px;top:197px;width:1.1px;height:75px;background:#333;"></div>
<div style="left:834.95px;top:197px;width:1.1px;height:75px;background:#333;"></div>
<div style="left:29px;top:340.95px;width:806.5px;height:1.1px;background:#333;"></div>
<div style="left:29px;top:355.95px;width:806.5px;height:1.1px;background:#333;"></div>
<div style="left:29px;top:370.95px;width:806.5px;height:1.1px;background:#333;"></div>
<div style="left:29px;top:385.95px;width:806.5px;height:1.1px;background:#333;"></div>
<div style="left:29px;top:400.95px;width:806.5px;height:1.1px;background:#333;"></div>
<div style="left:29px;top:415.95px;width:806.5px;height:1.1px;background:#333;"></div>
<div style="left:29px;top:430.95px;width:806.5px;height:1.1px;background:#333;"></div>
<div style="left:29px;top:445.95px;width:806.5px;height:1.1px;background:#333;"></div>
<div style="left:78.95px;top:326px;width:1.1px;height:121px;background:#333;"></div>
<div style="left:428.95px;top:326px;width:1.1px;height:121px;background:#333;"></div>
<div style="left:834.95px;top:341.5px;width:1.1px;height:105.5px;background:#333;"></div>
<div style="left:429px;top:341.0px;width:407.0px;height:15.75px;border:1.500px solid #2e6b30"></div>
<div style="left:429px;top:415.75px;width:407.0px;height:16.0px;border:1.500px solid #2e6b30"></div>
<div class="t" style="left:30px;top:288.15px;font-size:10px;color:#111;font-weight:bold">ЗАВДАННЯ 5. Зустрічі під час візиту до ЗВО</div>
<div class="t" style="left:30px;top:315px;font-size:10px;color:#111;">Назвіть найбільші виклики для експертної групи в межах організації та проведення відкритої зустрічі.</div>
<div class="t" style="left:31px;top:329.65px;font-size:10px;color:#111;">№</div>
<div class="t" style="left:239px;top:329.65px;font-size:10px;color:#111;">Виклик</div>
<div class="t" style="left:72px;top:344.77px;font-size:10px;color:#111;">1</div>
<div class="t" style="left:82px;top:344.77px;font-size:10px;color:#111;">Надмірна кількість кількість присутніх, зокрема заангажованих</div>
<div class="t" style="left:432px;top:344.77px;font-size:10px;color:#111;">Нагадування про дедлайни, запис в чат.</div>
<div class="t" style="left:72px;top:359.65px;font-size:10px;color:#111;">2</div>
<div class="t" style="left:82px;top:359.65px;font-size:10px;color:#111;">Присутність іноземців, які не володіють українською мовою</div>
<div class="t" style="left:432px;top:359.65px;font-size:10px;color:#111;">Спілкування англійською. Нехай говорять (ведеться запис).</div>
<div class="t" style="left:72px;top:374.65px;font-size:10px;color:#111;">3</div>
<div class="t" style="left:82px;top:374.65px;font-size:10px;color:#111;">Обговорення тем, що не стосуються безпосередньо ОП</div>
<div class="t" style="left:432px;top:374.65px;font-size:10px;color:#111;">Вічливо зупиняти. Попередження на початку зустрічі.</div>
<div class="t" style="left:72px;top:389.65px;font-size:10px;color:#111;">4</div>
<div class="t" style="left:82px;top:389.65px;font-size:10px;color:#111;">Присутність абсолютно сторонніх необізнаних осіб</div>
<div class="t" style="left:432px;top:389.65px;font-size:10px;color:#111;">Розмови лише по ОП. Видалення із зустрічі після попереджень.</div>
<div class="t" style="left:72px;top:404.65px;font-size:10px;color:#111;">5</div>
<div class="t" style="left:82px;top:404.65px;font-size:10px;color:#111;">Присутність осіб, які проводять сторонні рекламні акції</div>
<div class="t" style="left:432px;top:404.65px;font-size:10px;color:#111;">Розмови лише по ОП. Видалення із зустрічі після попереджень.</div>
<div class="t" style="left:72px;top:419.65px;font-size:10px;color:#111;">6</div>
<div class="t" style="left:82px;top:419.65px;font-size:10px;color:#111;">Вірусні або спам-презентації</div>
<div class="t" style="left:432px;top:419.65px;font-size:10px;color:#111;">Розмови лише по ОП. Видалення із зустрічі після попереджень.</div>
<div class="t" style="left:72px;top:434.52px;font-size:10px;color:#111;">7</div>
<div class="t" style="left:82px;top:434.52px;font-size:10px;color:#111;">Поява несподіваних фактів, що потребують перевірки</div>
<div class="t" style="left:432px;top:434.52px;font-size:10px;color:#111;">Планувати на 1 день.</div>
<div class="t" style="left:30px;top:475.52px;font-size:10px;color:#111;font-weight:bold">ЗАВДАННЯ 6. Порадник керівнику ЕГ</div>
<div class="t" style="left:72px;top:490.65px;font-size:10px;color:#111;">1</div>
<div class="t" style="left:72px;top:505.52px;font-size:10px;color:#111;">2</div>
<div style="left:72px;top:517px;width:8px;height:6px;overflow:hidden"><div class="t" style="left:0;top:2px;font-size:10px;color:#000">3</div></div>
<div style="left:996px;top:183px;width:8px;height:348px;background:#fff;"></div>
<div style="left:996px;top:183px;width:0.8px;height:348px;background:#ececec;"></div>
<div style="left:997.5px;top:215px;width:5.0px;height:17.5px;background:#dadce0;border-radius:3px"></div>
<div style="left:0px;top:523px;width:1004px;height:8px;background:#fff;"></div>
<div style="left:0px;top:522.5px;width:996px;height:0.8px;background:#d8d8d8;"></div>
<div style="left:29px;top:523.5px;width:414px;height:6.0px;background:#dadce0;border-radius:0 3px 3px 0"></div>
<div style="left:974px;top:522px;width:22px;height:9px;background:#f5f5f5;border:1px solid #e0e0e0"></div>
<svg style="left:978px;top:524.5px" width="14" height="4" viewBox="0 0 14 4" fill="#777"><path d="M3 0v4L0 2zM11 0v4l3-2z"/></svg>
<div style="left:996px;top:492px;width:8px;height:30px;background:#f5f5f5;border:1px solid #e0e0e0"></div>
<svg style="left:998px;top:496px" width="4" height="22" viewBox="0 0 4 22" fill="#777"><path d="M0 3h4L2 0zM0 19h4l-2 3z"/></svg>
<div style="left:0px;top:531px;width:1004px;height:24px;background:#f9fbfd;"></div>
<div style="left:0px;top:531px;width:1004px;height:1px;background:#e6e6e6;"></div>
<div style="left:348px;top:531px;width:66px;height:24px;background:#e1e9f7;"></div>
<div style="left:38.8px;top:544.3px;width:7.5px;height:1.2px;background:#555;"></div>
<div style="left:41.95px;top:541.1px;width:1.2px;height:7.6px;background:#555;"></div>
<div style="left:66px;top:541.3px;width:10px;height:1.6px;background:#555;"></div>
<div style="left:66px;top:544.4px;width:10px;height:1.6px;background:#555;"></div>
<div style="left:66px;top:547.5px;width:10px;height:1.6px;background:#555;"></div>
<div class="t" style="left:102.5px;top:540px;font-size:10.9px;color:#444;-webkit-text-stroke:.3px #444">Розподіл на групи</div>
<div class="car" style="left:200px;top:543.5px;border-top-color:#444"></div>
<div class="t" style="left:223.5px;top:540px;font-size:10.4px;color:#444;-webkit-text-stroke:.3px #444">Група 1</div>
<div class="car" style="left:265px;top:543.5px;border-top-color:#444"></div>
<div class="t" style="left:289px;top:540px;font-size:10.4px;color:#444;-webkit-text-stroke:.3px #444">Група 2</div>
<div class="car" style="left:333px;top:543.5px;border-top-color:#444"></div>
<div class="t" style="left:355.5px;top:540px;font-size:10.3px;color:#3b5fc4;font-weight:bold">Група 3</div>
<div class="car" style="left:400.5px;top:543.5px;border-top-color:#3b5fc4"></div>
<div class="t" style="left:423.5px;top:540px;font-size:10.4px;color:#444;-webkit-text-stroke:.3px #444">Група 4</div>
<div class="car" style="left:468px;top:543.5px;border-top-color:#444"></div>
<svg style="left:981px;top:540.5px" width="6" height="9" viewBox="0 0 6 9"><path d="M5 1 1.500 4.500 5 8" stroke="#555" fill="none" stroke-width="1.400"/></svg>
<div style="left:20px;top:501px;width:32px;height:32px;border-radius:16px;background:#1f2326"></div>
<svg style="left:27px;top:508px" width="18" height="18" viewBox="0 0 18 18" fill="none" stroke="#2fe38b" stroke-width="1.500"><path d="M3 12.500 11.500 4l2.500 2.500L5.500 15H3z"/><path d="M10 5.500 12.500 8"/><path d="M2 16.800h11"/></svg>
<svg style="left:902px;top:325px" width="9" height="14" viewBox="0 0 9 14"><path d="M.5.500v11l2.600-2.400 1.700 4 1.700-.8-1.700-3.800h3.500z" fill="#111" stroke="#fff" stroke-width=".6"/></svg>
</div><!-- /share -->
<!-- ================= RIGHT PANEL : VIDEO TILES ================= -->
<div style="left:1010px;top:45px;width:270px;height:568px;background:#14191c"></div>
<div style="left:1010px;top:53px;width:12px;height:560px;background:#181311"></div>
<div style="left:0;top:44.500px;width:1280px;height:8.500px;background:#14191c"></div>
<div style="left:0;top:53px;width:1022px;height:4px;background:#181311"></div>
<div style="left:1013.5px;top:341px;width:4px;height:40px;border-radius:2px;background:#8a8a8a"></div>
<svg style="left:1071px;top:110px" width="160.500" height="90" viewBox="0 0 160 90" preserveAspectRatio="none"><defs><filter id="b110" x="-10%" y="-10%" width="120%" height="120%"><feGaussianBlur stdDeviation="1.300"/></filter><filter id="bb110" x="-20%" y="-20%" width="140%" height="140%"><feGaussianBlur stdDeviation="4"/></filter><clipPath id="c110"><rect y="0" width="160" height="90" rx="5"/></clipPath></defs><g clip-path="url(#c110)"><rect width="160" height="92" fill="#bbbcbd"/>
<g filter="url(#bb110)"><rect x="-10" y="-10" width="62" height="110" fill="#a9afb6"/><rect x="52" y="-10" width="60" height="110" fill="#c6c4c1"/><rect x="70" y="-12" width="110" height="22" fill="#7a736c"/><rect x="146" y="-10" width="30" height="120" fill="#574b42"/><rect x="108" y="42" width="34" height="50" fill="#7a6b5a"/><rect x="112" y="10" width="30" height="30" fill="#bdb7b0"/></g>
<g filter="url(#b110)"><path d="M46 92c0-10 1-20 4-28 0-18 9-27 23-27s23 9 23 27c3 8 5 18 5 28z" fill="#2b2421"/><ellipse cx="72" cy="58" rx="12.500" ry="15" fill="#d8c3b6"/><path d="M58 56c0-12 8-15 14-15s15 3 15 15c-4-5-8-7-15-7s-10 2-14 7z" fill="#2b2421"/><ellipse cx="66.500" cy="58" rx="2.500" ry="1" fill="#6d5a55"/><ellipse cx="78" cy="58" rx="2.500" ry="1" fill="#6d5a55"/><path d="M30 92c4-14 22-20 42-20s38 6 44 20z" fill="#1d1b1c"/></g></g></svg>
<div style="left:1070.500px;top:109px;width:161.500px;height:92.200px;border:2.600px solid #10e880;border-radius:8px 8px 2px 2px"></div>
<svg style="left:1078.500px;top:115.500px" width="21.500" height="25" viewBox="0 0 22 25"><g fill="#f7a51f"><rect x="2.600" y="4.500" width="3.700" height="13" rx="1.850"/><rect x="6.600" y="1.300" width="3.700" height="14" rx="1.850"/><rect x="10.600" y=".3" width="3.700" height="15" rx="1.850"/><rect x="14.500" y="2.500" width="3.600" height="14" rx="1.800"/><path d="M2.600 12h15.500v5.500c0 4.500-3 7.300-7.500 7.300S2.600 21.500 2.600 17z"/><path d="M14.500 17.500l4-6.500c1-1.600 3.500-.6 2.900 1.300l-2.900 8.200z"/></g><path d="M6.450 6v8M10.450 3v10M14.400 4v10" stroke="#e08a10" stroke-width=".5" fill="none"/></svg>
<div class="nmb" style="left:1074px;top:178.5px;width:105px"></div>
<div class="nm" style="left:1078px;top:182.3px;font-size:12.8px">Марина Пічугіна</div>
<svg style="left:1071px;top:201px" width="160.500" height="89" viewBox="0 0 160 90" preserveAspectRatio="none"><defs><filter id="b200" x="-10%" y="-10%" width="120%" height="120%"><feGaussianBlur stdDeviation="1.300"/></filter><filter id="bb200" x="-20%" y="-20%" width="140%" height="140%"><feGaussianBlur stdDeviation="4"/></filter><clipPath id="c200"><rect y="0" width="160" height="90" rx="0"/></clipPath></defs><g clip-path="url(#c200)"><rect width="160" height="92" fill="#797979"/>
<path d="M3 2l7 1 .500 9-6 8zM10.500 12.500 11 24l-8-2z" fill="#f4bd19"/><path d="M4 6l6.500 6.500L4.500 20z" fill="#3b8fe8"/>
<g fill="#3c3c3c"><rect x="15" y="7" width="16" height="2.300"/><rect x="15" y="11.500" width="13" height="2.300"/><rect x="15" y="16" width="24" height="2.300"/><rect x="15" y="20.500" width="28" height="2.300"/></g>
<g filter="url(#b200)"><path d="M58 92C54 50 62 8 96 6c34 0 42 44 38 86z" fill="#3a282b"/><ellipse cx="93" cy="44" rx="21" ry="28" fill="#b99a7d"/><path d="M70 46C68 18 84 12 94 12s26 6 23 36c-3-12-8-22-14-26-8 6-20 8-26 10-3 4-6 8-7 14z" fill="#3a282b"/><ellipse cx="84" cy="42" rx="4" ry="1.600" fill="#5b4a40"/><ellipse cx="103" cy="42" rx="4" ry="1.600" fill="#5b4a40"/><path d="M83 60c6 5 15 5 21 0-4 3-17 3-21 0z" fill="#efe6dc" stroke="#efe6dc" stroke-width="2"/><path d="M40 92c8-12 30-14 52-14s40 4 52 14z" fill="#4b1c2a"/></g></g></svg>
<div class="nmb" style="left:1074px;top:268.5px;width:157px"></div>
<svg style="left:1077px;top:271.5px" width="13" height="14" viewBox="0 0 13 14"><rect x="3.900" y=".6" width="5.200" height="8" rx="2.600" fill="#ee4b57"/><path d="M2 6.500a4.500 4.500 0 0 0 9 0M6.500 11v2M4 13.200h5" stroke="#ee4b57" stroke-width="1.500" fill="none"/><path d="M12 .6 1 13.200" stroke="#ee4b57" stroke-width="1.700"/></svg>
<div class="nm" style="left:1096px;top:272.3px;font-size:12.3px">Юлія Гончар (Yuliia H...</div>
<svg style="left:1071px;top:289.7px" width="160.500" height="90" viewBox="0 0 160 90" preserveAspectRatio="none"><defs><filter id="b290" x="-10%" y="-10%" width="120%" height="120%"><feGaussianBlur stdDeviation="1.300"/></filter><filter id="bb290" x="-20%" y="-20%" width="140%" height="140%"><feGaussianBlur stdDeviation="4"/></filter><clipPath id="c290"><rect y="0" width="160" height="90" rx="0"/></clipPath></defs><g clip-path="url(#c290)"><rect width="160" height="92" fill="#818182"/>
<path d="M2 22l6-11 14-1 4 3 10-1 6-6 10-1 3 6 9 3 1 8-6 3-1 7-8 1-2 6-8 5-2-6-8-1-6 6-3-2 4-8-4-6-12 1-5 3z" fill="#a9bdc4"/>
<path d="M19 10h3.500l.500 8-4 8z" fill="#f4bd19"/><path d="M19 12l5 6-5 8z" fill="#3b8fe8"/><path d="M24 18l.500 9-5-.500z" fill="#f4bd19"/>
<g fill="#4a5a60"><rect x="28" y="13" width="14" height="1.500"/><rect x="28" y="16.500" width="11" height="1.500"/><rect x="28" y="20" width="18" height="1.500"/><rect x="28" y="23.500" width="22" height="1.500"/></g>
<g filter="url(#b290)"><path d="M42 92c0-10 6-18 16-22l44 0c12 4 18 12 20 22z" fill="#2a2a2b"/><path d="M50 92C56 60 56 18 82 14c26 0 28 44 38 78z" fill="#8e5436"/><ellipse cx="81" cy="46" rx="17" ry="23" fill="#dcae95"/><path d="M63 50c-2-22 6-30 18-30s20 8 18 30c-2-10-6-18-16-24-8 4-16 12-20 24z" fill="#8e5436"/><ellipse cx="74" cy="42" rx="3.500" ry="1.300" fill="#5a3a30"/><ellipse cx="89" cy="42" rx="3.500" ry="1.300" fill="#5a3a30"/><path d="M75 59c4 2 9 2 13 0" stroke="#b2606a" stroke-width="1.600" fill="none"/></g></g></svg>
<div class="nmb" style="left:1074px;top:358.5px;width:157px"></div>
<div class="nm" style="left:1078px;top:362.3px;font-size:12.25px">Олена Книш, тренерка N...</div>
<svg style="left:1071px;top:379.5px" width="160.500" height="90" viewBox="0 0 160 90" preserveAspectRatio="none"><defs><filter id="b380" x="-10%" y="-10%" width="120%" height="120%"><feGaussianBlur stdDeviation="1.300"/></filter><filter id="bb380" x="-20%" y="-20%" width="140%" height="140%"><feGaussianBlur stdDeviation="4"/></filter><clipPath id="c380"><rect y="0" width="160" height="90" rx="0"/></clipPath></defs><g clip-path="url(#c380)"><rect width="160" height="92" fill="#cfc8b8"/>
<g filter="url(#bb380)"><rect x="-10" y="-10" width="22" height="120" fill="#7d5e62"/><rect x="12" y="-10" width="22" height="120" fill="#d9d5d3"/><rect x="30" y="-10" width="36" height="120" fill="#e6d672"/><rect x="60" y="-10" width="10" height="120" fill="#b7b19a"/><rect x="70" y="-10" width="40" height="60" fill="#ece6a8"/><rect x="108" y="-10" width="26" height="120" fill="#e3dfdc"/><rect x="134" y="-10" width="40" height="120" fill="#a58f92"/><rect x="20" y="40" width="40" height="30" fill="#c9cfa0"/><ellipse cx="100" cy="66" rx="40" ry="26" fill="#e0246d"/></g>
<g filter="url(#b380)"><path d="M40 92c4-16 14-24 28-28h48c14 4 22 12 26 28z" fill="#d9d6d0"/><path d="M50 92l6-20 10-6 8 26zM118 66l14 8 8 18h-20zM92 70h20l2 22H90z" fill="#222"/><path d="M80 60h30v16H80z" fill="#16171b"/><ellipse cx="94" cy="35" rx="18.500" ry="20" fill="#33262a"/><ellipse cx="93.500" cy="41" rx="16" ry="18.500" fill="#c99b88"/><path d="M108 52c6 6 10 12 10 20l-10-6z" fill="#3a2a30"/><ellipse cx="87" cy="35" rx="3.500" ry="1.300" fill="#5a3a38"/><ellipse cx="101" cy="35" rx="3.500" ry="1.300" fill="#5a3a38"/><path d="M89 51c3 1 7 1 10 0" stroke="#9a5a5a" stroke-width="1.500" fill="none"/></g></g></svg>
<div class="nmb" style="left:1074px;top:448.5px;width:139px"></div>
<svg style="left:1077px;top:451.5px" width="13" height="14" viewBox="0 0 13 14"><rect x="3.900" y=".6" width="5.200" height="8" rx="2.600" fill="#ee4b57"/><path d="M2 6.500a4.500 4.500 0 0 0 9 0M6.500 11v2M4 13.200h5" stroke="#ee4b57" stroke-width="1.500" fill="none"/><path d="M12 .6 1 13.200" stroke="#ee4b57" stroke-width="1.700"/></svg>
<div class="nm" style="left:1096px;top:452.3px;font-size:12.4px">Наталія Лащевська</div>
<svg style="left:1071px;top:469.5px" width="160.500" height="90.3" viewBox="0 0 160 90" preserveAspectRatio="none"><defs><filter id="b470" x="-10%" y="-10%" width="120%" height="120%"><feGaussianBlur stdDeviation="1.300"/></filter><filter id="bb470" x="-20%" y="-20%" width="140%" height="140%"><feGaussianBlur stdDeviation="4"/></filter><clipPath id="c470"><rect y="-12" width="160" height="102" rx="7"/></clipPath></defs><g clip-path="url(#c470)"><rect width="160" height="92" fill="#6a4b33"/>
<g filter="url(#b470)"><rect x="0" y="0" width="160" height="6" fill="#4a3424"/><rect x="18" y="6" width="142" height="12" fill="#80603f"/><rect x="0" y="6" width="18" height="86" fill="#8a6a4c"/><rect x="18" y="20" width="12" height="52" fill="#3c4f52"/><rect x="32" y="19" width="110" height="36" fill="#a9d3e4"/><rect x="32" y="44" width="110" height="8" fill="#c4dfe8"/><rect x="32" y="51" width="110" height="4" fill="#6f9bb0"/><rect x="32" y="55" width="110" height="16" fill="#6c6a55"/><rect x="141" y="19" width="4" height="56" fill="#5a4030"/><rect x="145" y="20" width="15" height="50" fill="#4c5a5c"/><rect x="120" y="62" width="40" height="30" fill="#5c3823"/><ellipse cx="130" cy="68" rx="10" ry="6" fill="#8f9aa0"/>
<path d="M28 92c2-12 12-20 30-22h34c22 2 40 10 46 22z" fill="#e9e9ea"/>
<path d="M30 70C28 30 44 8 70 8s42 20 40 50c0 8-4 12-10 14H38z" fill="#1f1b1f"/><ellipse cx="70.500" cy="46" rx="17.500" ry="24" fill="#d3a596"/><path d="M54 40C54 16 90 14 90 38c-4-8-10-12-18-12s-14 6-18 14z" fill="#1f1b1f"/><rect x="54" y="36" width="14" height="10" rx="2.500" fill="#7a5e60" stroke="#1a1418" stroke-width="1.800"/><rect x="71.500" y="34" width="15" height="10" rx="2.500" fill="#9a8596" stroke="#1a1418" stroke-width="1.800"/><path d="M68 40l3.500-1" stroke="#1a1418" stroke-width="1.500"/><path d="M67 55c3 1.500 7 1.500 10 0" stroke="#b0485a" stroke-width="1.800" fill="none"/></g></g></svg>
<div class="nmb" style="left:1074px;top:538.5px;width:113px"></div>
<svg style="left:1077px;top:541.5px" width="13" height="14" viewBox="0 0 13 14"><rect x="3.900" y=".6" width="5.200" height="8" rx="2.600" fill="#ee4b57"/><path d="M2 6.500a4.500 4.500 0 0 0 9 0M6.500 11v2M4 13.200h5" stroke="#ee4b57" stroke-width="1.500" fill="none"/><path d="M12 .6 1 13.200" stroke="#ee4b57" stroke-width="1.700"/></svg>
<div class="nm" style="left:1096px;top:542.3px;font-size:12.7px">Lina Artemenko</div>
<div style="left:1114.500px;top:561.500px;width:73px;height:31px;border-radius:5px;background:#101214"></div>
<svg style="left:1144px;top:572.500px" width="14" height="9" viewBox="0 0 14 9"><path d="M1 1.500 7 7.500l6-6" stroke="#a9a7c4" stroke-width="1.500" fill="none"/></svg>
<!-- ================= ZOOM TOOLBAR ================= -->
<div id="zbar" style="left:0;top:612.500px;width:1280px;height:59.500px;background:#000">
<div style="left:9px;top:8.5px;width:87px;height:48px;border-radius:8px;background:#1d1d1d"></div>
<svg style="left:40px;top:11.5px" width="24" height="26" viewBox="0 0 24 26" fill="none" stroke="#fff" stroke-width="1.700"><rect x="8" y="1" width="8" height="14" rx="4"/><path d="M4 12a8 8 0 0 0 16 0M12 20v4M7.500 24.500h9"/><path d="M22 3 2 23" stroke="#ff2d6b" stroke-width="2"/></svg>
<div class="zl" style="left:52px;top:41.5px">Audio</div>
<div class="zl" style="left:144.5px;top:41.5px">Video</div>
<svg style="left:352px;top:13.5px" width="24" height="21" viewBox="0 0 24 21" fill="none" stroke="#fff" stroke-width="1.700"><path d="M12 19.500C6 15 1.500 11.500 1.500 6.800 1.500 3.500 4 1.200 6.800 1.200c2.200 0 4 1.300 5.200 3.300 1.200-2 3-3.300 5.200-3.300 2.800 0 5.300 2.300 5.300 5.600 0 4.700-4.500 8.200-10.500 12.700z"/></svg>
<svg style="left:386.500px;top:20.0px" width="9" height="6" viewBox="0 0 9 6"><path d="M1 5 4.500 1.500 8 5" stroke="#fff" stroke-width="1.500" fill="none"/></svg>
<div class="zl" style="left:363px;top:41.5px">React</div>
<svg style="left:459px;top:14.5px" width="20" height="19" viewBox="0 0 20 19" fill="none" stroke="#fff" stroke-width="1.600"><circle cx="6" cy="4.200" r="3"/><path d="M1 15.500c0-3 2-5 5-5s5 2 5 5c0 1.300-.8 2-2 2H3c-1.200 0-2-.7-2-2z"/><circle cx="14" cy="6" r="2.500"/><path d="M13 11c3.500-.8 6 1.200 6 4 0 1.200-.7 2-2 2h-3"/></svg>
<div class="t" style="left:484.500px;top:17.5px;font-size:11.500px;color:#d8d8d8">18</div>
<svg style="left:516.500px;top:20.0px" width="9" height="6" viewBox="0 0 9 6"><path d="M1 5 4.500 1.500 8 5" stroke="#fff" stroke-width="1.500" fill="none"/></svg>
<div class="zl" style="left:468px;top:41.5px">Participants</div>
<div style="left:570px;top:13.5px;width:24px;height:20px;border-radius:3px;background:#22ea8d"></div>
<svg style="left:576.500px;top:17.0px" width="11" height="13" viewBox="0 0 11 13"><path d="M5.500 1v12M1 5.500 5.500 1 10 5.500" stroke="#000" stroke-width="2.300" fill="none"/></svg>
<div class="zl" style="left:582px;top:41.5px">Share</div>
<svg style="left:667px;top:12.5px" width="24" height="23" viewBox="0 0 24 23"><path d="M10 3c1 6 3.500 8.500 9.500 9.500C13.500 13.500 11 16 10 22 9 16 6.500 13.500.5 12.500 6.500 11.500 9 9 10 3z" fill="#c9f0f0"/><path d="M19.500 0c.4 2.500 1.500 3.600 4 4-2.500.4-3.600 1.500-4 4-.4-2.500-1.500-3.600-4-4 2.500-.4 3.600-1.500 4-4z" fill="#e8f8ff"/></svg>
<div class="zl" style="left:678.5px;top:41.5px">AI Companion</div>
<svg style="left:755px;top:12.5px" width="23" height="23" viewBox="0 0 23 23" fill="none" stroke="#fff" stroke-width="1.700"><path d="M8 1.200H5a3.800 3.800 0 0 0-3.800 3.800v3M15 21.800h3a3.800 3.800 0 0 0 3.800-3.800v-3"/><circle cx="17" cy="6" r="3.800"/><circle cx="6" cy="17" r="3.800"/></svg>
<div class="zl" style="left:766px;top:41.5px">Apps</div>
<svg style="left:834px;top:12.0px" width="23" height="23" viewBox="0 0 23 23"><circle cx="11.500" cy="11.500" r="10.500" fill="none" stroke="#fff" stroke-width="1.700"/><circle cx="11.500" cy="11.500" r="4.700" fill="#fff"/></svg>
<div class="zl" style="left:846px;top:41.5px">Record</div>
<svg style="left:918.500px;top:12.5px" width="24" height="23" viewBox="0 0 24 23" fill="none" stroke="#fff" stroke-width="1.600"><path d="M8 4V3.500A2.700 2.700 0 0 1 10.700 .8h9.600A2.700 2.700 0 0 1 23 3.500v6a2.700 2.700 0 0 1-2.700 2.700H20v3l-1.500-1.200"/><path d="M3.700 5.800h11.600a2.700 2.700 0 0 1 2.700 2.700v6a2.700 2.700 0 0 1-2.700 2.700H9L4.500 21v-3.800h-.8A2.700 2.700 0 0 1 1 14.500v-6a2.700 2.700 0 0 1 2.700-2.700z" fill="#000"/><g fill="#fff" stroke="none"><circle cx="5.800" cy="11.500" r="1.100"/><circle cx="9.500" cy="11.500" r="1.100"/><circle cx="13.200" cy="11.500" r="1.100"/></g></svg>
<svg style="left:959.500px;top:20.0px" width="9" height="6" viewBox="0 0 9 6"><path d="M1 5 4.500 1.500 8 5" stroke="#fff" stroke-width="1.500" fill="none"/></svg>
<div class="zl" style="left:931px;top:41.5px">Chat</div>
<svg style="left:1007.500px;top:12.0px" width="23" height="23" viewBox="0 0 23 23"><circle cx="11.500" cy="11.500" r="10.500" fill="none" stroke="#fff" stroke-width="1.700"/><g fill="#fff"><circle cx="6.500" cy="11.500" r="1.300"/><circle cx="11.500" cy="11.500" r="1.300"/><circle cx="16.500" cy="11.500" r="1.300"/></g></svg>
<div class="zl" style="left:1019px;top:41.5px">More</div>
<svg style="left:1220px;top:11.5px" width="26" height="24" viewBox="0 0 26 24" fill="none"><path d="M12 1.500 24 .8v19.500l-6 2.700V6" stroke="#ff2d78" stroke-width="1.700"/><circle cx="9" cy="5.500" r="2.600" stroke="#fff" stroke-width="1.500"/><path d="M4 22l3-5.500-1-4.500 3-2.500 3 1.500 2.500 3M9 12l2.500 5L14 22M5.500 11.500 2.500 14" stroke="#fff" stroke-width="1.600" stroke-linejoin="round"/></svg>
<div class="zl" style="left:1231.5px;top:41.5px">Leave</div>
<div style="left:35.0px;top:57px;width:34px;height:3px;background:repeating-linear-gradient(90deg,#8a8a8a 0 3px,#000 3px 5px);opacity:.7"></div>
<div style="left:129.0px;top:57px;width:30px;height:3px;background:repeating-linear-gradient(90deg,#8a8a8a 0 3px,#000 3px 5px);opacity:.7"></div>
<div style="left:349.0px;top:57px;width:28px;height:3px;background:repeating-linear-gradient(90deg,#8a8a8a 0 3px,#000 3px 5px);opacity:.7"></div>
<div style="left:437.0px;top:57px;width:62px;height:3px;background:repeating-linear-gradient(90deg,#8a8a8a 0 3px,#000 3px 5px);opacity:.7"></div>
<div style="left:568.0px;top:57px;width:28px;height:3px;background:repeating-linear-gradient(90deg,#8a8a8a 0 3px,#000 3px 5px);opacity:.7"></div>
<div style="left:641.0px;top:57px;width:74px;height:3px;background:repeating-linear-gradient(90deg,#8a8a8a 0 3px,#000 3px 5px);opacity:.7"></div>
<div style="left:753.0px;top:57px;width:26px;height:3px;background:repeating-linear-gradient(90deg,#8a8a8a 0 3px,#000 3px 5px);opacity:.7"></div>
<div style="left:828.0px;top:57px;width:36px;height:3px;background:repeating-linear-gradient(90deg,#8a8a8a 0 3px,#000 3px 5px);opacity:.7"></div>
<div style="left:920.0px;top:57px;width:22px;height:3px;background:repeating-linear-gradient(90deg,#8a8a8a 0 3px,#000 3px 5px);opacity:.7"></div>
<div style="left:1006.0px;top:57px;width:26px;height:3px;background:repeating-linear-gradient(90deg,#8a8a8a 0 3px,#000 3px 5px);opacity:.7"></div>
<div style="left:1216.0px;top:57px;width:30px;height:3px;background:repeating-linear-gradient(90deg,#8a8a8a 0 3px,#000 3px 5px);opacity:.7"></div>
</div>
<div style="left:52px;top:609.500px;width:300px;height:36.500px;background:#f2f2f2;box-shadow:0 0 2px rgba(0,0,0,.4)"></div>
<div class="t" style="left:56px;top:614.500px;font-size:12px;color:#585858">Unmute my audio (Alt+A). Or you can simply press and</div>
<div class="t" style="left:56px;top:630.500px;font-size:12px;color:#585858">hold the Space bar to temporarily unmute.</div>
<!-- ================= WINDOWS TASKBAR ================= -->
<div id="tb" style="left:0;top:672px;width:1280px;height:48px;background:linear-gradient(90deg,#ddd6e7 0%,#e1d8e8 25%,#ead9e3 45%,#efdcdc 60%,#edd9d9 100%)">
<svg style="left:20px;top:12px" width="26" height="25" viewBox="0 0 26 25"><circle cx="11" cy="10" r="9" fill="#f6a21c"/><circle cx="9" cy="8" r="5" fill="#fbc04a" opacity=".7"/><path d="M6 23.500a4.500 4.500 0 0 1 .5-9 6 6 0 0 1 11-1 5 5 0 0 1 2.500 10z" fill="#e9f1fb" stroke="#b8d2f0" stroke-width=".8"/></svg>
<div class="t" style="left:51px;top:10px;font-size:12.200px;color:#1f1f1f">9°C</div>
<div class="t" style="left:51px;top:26px;font-size:12px;color:#555">Partly sunny</div>
<svg style="left:295px;top:13px" width="24" height="24" viewBox="0 0 24 24"><defs><linearGradient id="wg" x1="0" y1="0" x2="1" y2="1"><stop offset="0" stop-color="#39b5f5"/><stop offset="1" stop-color="#0a6fd6"/></linearGradient></defs><g fill="url(#wg)"><rect x="0" y="0" width="11.300" height="11.300" rx="1"/><rect x="12.700" y="0" width="11.300" height="11.300" rx="1"/><rect x="0" y="12.700" width="11.300" height="11.300" rx="1"/><rect x="12.700" y="12.700" width="11.300" height="11.300" rx="1"/></g></svg>
<div style="left:333.500px;top:9px;width:217px;height:30px;border-radius:15px;background:#f8f3f7;box-shadow:0 .5px 1.500px rgba(0,0,0,.28)"></div>
<svg style="left:344px;top:16px" width="15" height="15" viewBox="0 0 15 15" fill="none" stroke="#222" stroke-width="1.700"><circle cx="6" cy="6" r="4.700"/><path d="M9.500 9.500 14 14"/></svg>
<div class="t" style="left:370px;top:17px;font-size:13.500px;color:#5a5a5a">Пошук</div>
<svg style="left:564px;top:12px" width="25" height="24" viewBox="0 0 25 24"><defs><linearGradient id="cp1" x1="0" y1="0" x2="1" y2="1"><stop offset="0" stop-color="#2fb4f0"/><stop offset=".5" stop-color="#7c5cf0"/><stop offset="1" stop-color="#f25a9a"/></linearGradient><linearGradient id="cp2" x1="0" y1="1" x2="1" y2="0"><stop offset="0" stop-color="#f9c23c"/><stop offset=".5" stop-color="#f0603c"/><stop offset="1" stop-color="#c84ce0"/></linearGradient></defs><path d="M8 2h7c2 0 3 1 3.500 3l2 8c.5 2-1 3-3 3h-3l-2-8C12 6 11 5 9 5H4c.5-2 2-3 4-3z" fill="url(#cp1)"/><path d="M17 22h-7c-2 0-3-1-3.500-3l-2-8c-.5-2 1-3 3-3h3l2 8c.500 2 1.500 3 3.500 3h5c-.5 2-2 3-4 3z" fill="url(#cp2)"/><path d="M4 5h5c1.500 0 2.500 1 3 3l-4.500 0C5.500 8 4 9 4.500 11L3 7c-.3-1 .2-2 1-2z" fill="#2fd08c"/></svg>
<svg style="left:607px;top:12px" width="26" height="25" viewBox="0 0 26 25"><circle cx="12.500" cy="13" r="11.500" fill="#1a6fe0"/><path d="M3 9C6 2 16 0 22 4l3-2-1.500 5c2 5 0 12-6 15 3-4 3-8 0-11-3-3-9-3-14.500-2z" fill="#0d47b8"/><circle cx="12.500" cy="14" r="6.500" fill="#cfe4fb"/><path d="M7 12l5.500 4 5.500-4" stroke="#8db8ee" stroke-width="1.300" fill="none"/></svg>
<svg style="left:652px;top:14px" width="25" height="19" viewBox="0 0 25 19"><rect width="25" height="19" rx="2" fill="#1f6fd0"/><path d="M0 13 4 6l3 5 4-7 4 8 4-6 6 7v4a2 2 0 0 1-2 2H2a2 2 0 0 1-2-2z" fill="#6fd0f5"/><path d="M0 16l5-4 4 3 5-5 4 4 7-3v6a2 2 0 0 1-2 2H2a2 2 0 0 1-2-2z" fill="#c9effc"/></svg>
<svg style="left:696px;top:12px" width="26" height="25" viewBox="0 0 26 25"><rect x="2" y="1" width="12" height="12" fill="#f4ecec" stroke="#d23a2a" stroke-width="2" stroke-dasharray="2.500 2"/><path d="M9 6l9 12M19 6 10 18" stroke="#8a8f98" stroke-width="2"/><circle cx="20" cy="20" r="2.600" fill="none" stroke="#2b8de0" stroke-width="1.800"/><circle cx="13" cy="21.500" r="2.600" fill="none" stroke="#2b8de0" stroke-width="1.800"/></svg>
<svg style="left:740px;top:13px" width="25" height="22" viewBox="0 0 25 22"><path d="M0 2.500C0 1.500.8 1 1.500 1h7l2.500 2.500h12.500c.8 0 1.500.7 1.500 1.500v3H0z" fill="#e8a613"/><rect x="0" y="5" width="25" height="17" rx="1.500" fill="#fccc3a"/><rect x="5" y="14" width="15" height="8" rx="1.500" fill="#2a7fd8"/><rect x="8" y="17" width="9" height="1.800" rx=".9" fill="#0c4fa0"/></svg>
<svg style="left:785px;top:13px" width="22" height="22" viewBox="0 0 22 22"><circle cx="11" cy="11" r="10.500" fill="#2aa3e0"/><path d="M4.500 10.800 16.500 6l-2 10.500-4-3-2 2-.3-3.200 5.500-4.500-7 3.800z" fill="#fff"/></svg>
<div style="left:798.500px;top:12.5px;width:15px;height:10px;border-radius:3px;background:#8a8a8a"></div>
<div class="t" style="left:801.500px;top:14px;font-size:8px;color:#fff">16</div>
<div style="left:793px;top:40.5px;width:6px;height:2.500px;border-radius:1.300px;background:#8b8589"></div>
<svg style="left:828px;top:13px" width="24" height="24" viewBox="0 0 24 24"><circle cx="12" cy="12" r="11.500" fill="#fff"/><path d="M12 .5a11.500 11.500 0 0 1 10 5.800H12a5.700 5.700 0 0 0-5 3L2.200 5.500A11.500 11.500 0 0 1 12 .5z" fill="#e33b2e"/><path d="M22 6.300a11.500 11.500 0 0 1-9.500 17.200l4.500-8.500a5.700 5.700 0 0 0 0-5.700V6.300z" fill="#fbc116"/><path d="M12.500 23.500A11.500 11.500 0 0 1 2.200 5.500L7 13.800a5.700 5.700 0 0 0 6.500 3.600z" fill="#2da94f"/><circle cx="12" cy="12" r="5.200" fill="#fff"/><circle cx="12" cy="12" r="4.200" fill="#3f86f4"/></svg>
<div style="left:842px;top:7.5px;width:16px;height:16px;border-radius:8px;background:radial-gradient(circle at 45% 45%,#c9b08a 0 30%,#6e6a48 60%,#4a4a34 100%)"></div>
<div style="left:837.500px;top:40.5px;width:6px;height:2.500px;border-radius:1.300px;background:#8b8589"></div>
<svg style="left:871px;top:13px" width="25" height="24" viewBox="0 0 25 24"><defs><linearGradient id="eg" x1="0" y1="0" x2="1" y2="1"><stop offset="0" stop-color="#35c1f1"/><stop offset="1" stop-color="#0c59a4"/></linearGradient></defs><circle cx="12.500" cy="12" r="11.500" fill="url(#eg)"/><path d="M1 12C1 5 7 .5 13 .5s11 4 11 9c0 3-2.500 5-5.500 5-2.500 0-3.500-1-3-2.500.5-1.300.5-3-1-4.200C12 6 7 6.500 4.500 10 3 12 2.500 15 3.500 18A11.400 11.400 0 0 1 1 12z" fill="#3ddb85" opacity=".85"/><path d="M9 13c0 4 3 8 8 8 2 0 4-.7 5.500-2-2 3-5.500 4.700-9.500 4.500C8 23 4.500 19 5 14.500c.3-2.300 2-4.500 4.500-5C9.200 10.500 9 11.700 9 13z" fill="#0b4d96"/></svg>
<div style="left:909px;top:5.5px;width:38px;height:37.500px;border-radius:5px;background:#f5ebeb;box-shadow:0 0 1px rgba(0,0,0,.15)"></div>
<div style="left:915px;top:11.5px;width:25px;height:24.500px;border-radius:10px;background:radial-gradient(circle at 50% 30%,#2f7df7,#0b4fe0)"></div>
<div class="t" style="left:919.500px;top:20.5px;font-size:6.500px;color:#fff;font-weight:bold">zoom</div>
<div style="left:920px;top:39.5px;width:16px;height:3px;border-radius:1.500px;background:#2a8794"></div>
<svg style="left:1018px;top:19.5px" width="12" height="8" viewBox="0 0 12 8"><path d="M1 7 6 1.500 11 7" stroke="#222" stroke-width="1.500" fill="none"/></svg>
<svg style="left:1045px;top:16px" width="9" height="13" viewBox="0 0 9 13" fill="none" stroke="#2c7f91" stroke-width="1.200"><rect x="2.700" y=".6" width="3.600" height="6.800" rx="1.800" fill="#7ab8c8"/><path d="M.8 6a3.700 3.700 0 0 0 7.400 0M4.500 10v2.400"/></svg>
<svg style="left:1056px;top:20px" width="11" height="11" viewBox="0 0 11 11"><path d="M10.300 .7 6.500 10.300 5.300 5.700.7 4.500z" fill="none" stroke="#2c7f91" stroke-width="1.200" stroke-linejoin="round"/></svg>
<div class="t" style="left:1083.500px;top:18.5px;font-size:10.800px;color:#333;-webkit-text-stroke:.2px #333">УКР</div>
<svg style="left:1123px;top:17px" width="17" height="13" viewBox="0 0 17 13" fill="none" stroke="#222" stroke-width="1.300"><path d="M1 4.500c4.500-4.500 10.500-4.500 15 0M3.300 7.200c3.200-3.200 7.200-3.200 10.400 0M5.700 9.700c1.800-1.800 3.800-1.800 5.600 0"/><circle cx="8.500" cy="11.700" r="1" fill="#222" stroke="none"/></svg>
<svg style="left:1147px;top:17px" width="15" height="13" viewBox="0 0 15 13" fill="none" stroke="#222" stroke-width="1.200"><path d="M1 4.500h2.500L7 1.200v10.600L3.500 8.500H1z"/><path d="M9.300 4.200c1 1.300 1 3.300 0 4.600M11.300 2.500c2 2.300 2 5.700 0 8"/><path d="M13.300 1c2 3 2 8 0 11" stroke="#b5a8a8"/></svg>
<svg style="left:1171px;top:16px" width="17" height="14" viewBox="0 0 17 14"><rect x="1.500" y="4.500" width="13" height="8" rx="1.500" fill="none" stroke="#222" stroke-width="1.200"/><rect x="3.200" y="6.200" width="9.600" height="4.600" rx=".6" fill="#222"/><rect x="15" y="7" width="1.600" height="3" rx=".5" fill="#222"/><path d="M3.500 .5 1.200 4.200h2L2.500 7" stroke="#222" stroke-width="1.100" fill="none"/></svg>
<div class="t" style="left:1233px;top:10.5px;font-size:11.400px;color:#222">10:05</div>
<div class="t" style="left:1204px;top:26.5px;font-size:11.400px;color:#222">23.10.2025</div>
</div>
</div>
</body>
</html>
